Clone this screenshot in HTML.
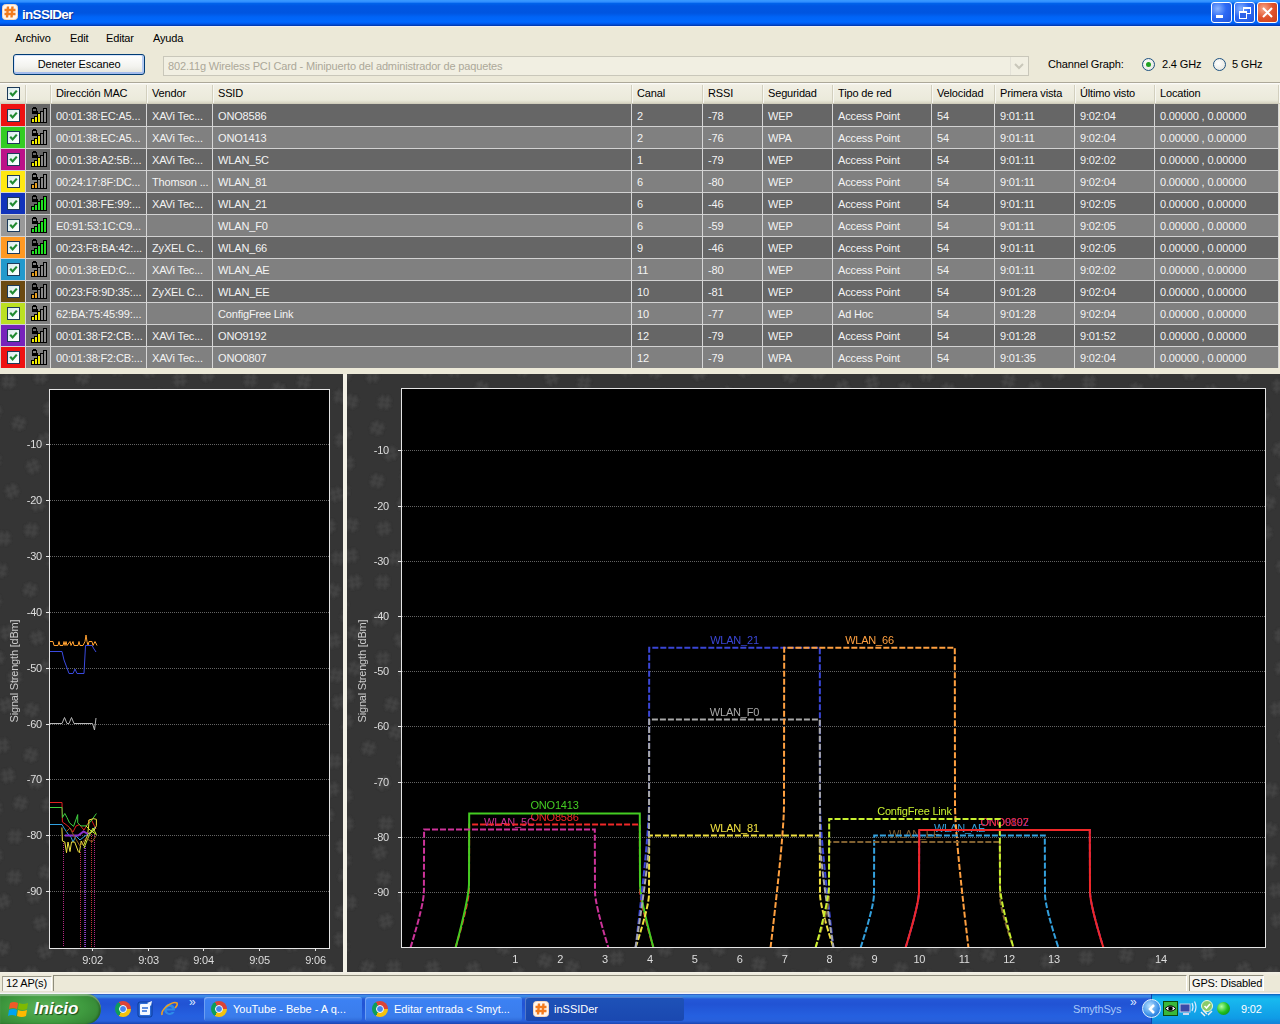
<!DOCTYPE html><html><head><meta charset="utf-8"><style>
*{margin:0;padding:0;box-sizing:border-box}
body{width:1280px;height:1024px;overflow:hidden;position:relative;background:#ECE9D8;font-family:"Liberation Sans", sans-serif;font-size:11px;letter-spacing:-0.15px;color:#000}
.a{position:absolute}
.t{position:absolute;white-space:nowrap;line-height:13px}
</style></head><body>
<div class="a" style="left:0;top:0;width:1280px;height:26px;background:linear-gradient(to bottom,#3A9BFF 0,#2E8CFF 2px,#0062EA 3.5px,#0056E2 6px,#0055E0 13px,#0064F6 17px,#0068FF 22px,#0056E8 24px,#0034A4 26px)"></div><div class="a" style="left:0;top:26px;width:1280px;height:1px;background:#F0F0F4"></div>
<svg class="a" style="left:2px;top:4px" width="16" height="16"><rect x="0.5" y="0.5" width="15" height="15" rx="3" fill="#FFF6EE" stroke="#F4D8C0"/><path d="M6 2.5 L5 13.5 M10.5 2.5 L9.5 13.5 M2.5 6 L13.5 6 M2.5 10 L13.5 10" stroke="#F27B1E" stroke-width="2.4"/></svg>
<div class="t" style="left:22px;top:7px;font:bold 13.5px/15px 'Liberation Sans',sans-serif;color:#FFF;letter-spacing:-0.7px;text-shadow:1px 1px 0 #0A2A8A">inSSIDer</div>
<div class="a" style="left:1211px;top:2px;width:21px;height:21px;border:1px solid #FFF;border-radius:3px;background:radial-gradient(circle at 30% 30%,#8AB4FF 0,#2D6AF5 45%,#1F54DA 100%)"><div class="a" style="left:4px;top:12px;width:7px;height:3px;background:#FFF"></div></div>
<div class="a" style="left:1234px;top:2px;width:21px;height:21px;border:1px solid #FFF;border-radius:3px;background:radial-gradient(circle at 30% 30%,#8AB4FF 0,#2D6AF5 45%,#1F54DA 100%)"><div class="a" style="left:8px;top:4px;width:8px;height:7px;border:1px solid #FFF;border-top-width:2px"></div><div class="a" style="left:4px;top:8px;width:8px;height:8px;border:1px solid #FFF;border-top-width:2px;background:#2D62E8"></div></div>
<div class="a" style="left:1257px;top:2px;width:21px;height:21px;border:1px solid #FFF;border-radius:3px;background:radial-gradient(circle at 30% 30%,#F7A88A 0,#E0522A 50%,#C8401C 100%)"><svg class="a" style="left:3px;top:3px" width="13" height="13"><path d="M2 2 L11 11 M11 2 L2 11" stroke="#FFF" stroke-width="2"/></svg></div>
<div class="t" style="left:15px;top:32px">Archivo</div>
<div class="t" style="left:70px;top:32px">Edit</div>
<div class="t" style="left:106px;top:32px">Editar</div>
<div class="t" style="left:153px;top:32px">Ayuda</div>
<div class="a" style="left:13px;top:54px;width:132px;height:21px;border:1px solid #003C74;border-radius:3px;background:linear-gradient(to bottom,#FFFFFF 0,#F3F3EF 60%,#E2E2DA 100%);box-shadow:inset 0 -2px 0 #A4BCEC, inset -2px 0 0 #B4CAF2, inset 1px 1px 0 #D8E4FA"></div>
<div class="t" style="left:13px;top:58px;width:132px;text-align:center">Deneter Escaneo</div>
<div class="a" style="left:163px;top:56px;width:866px;height:20px;border:1px solid #C9C7BA;background:#F1EFE2"></div>
<div class="t" style="left:168px;top:60px;color:#ACA899">802.11g Wireless PCI Card - Minipuerto del administrador de paquetes</div>
<div class="a" style="left:1010px;top:57px;width:18px;height:18px;background:#F1EFE2;border-left:1px solid #E4E2D8"></div>
<svg class="a" style="left:1013px;top:61px" width="12" height="10"><path d="M2 3 L6 7 L10 3" stroke="#C9C7BA" stroke-width="2" fill="none"/></svg>
<div class="t" style="left:1048px;top:58px">Channel Graph:</div>
<div class="a" style="left:1142px;top:58px;width:13px;height:13px;border-radius:50%;border:1px solid #1C5180;background:radial-gradient(circle at 40% 40%,#FFF 0,#E0E0D8 100%)"></div>
<div class="a" style="left:1146px;top:62px;width:5px;height:5px;border-radius:50%;background:#21A121"></div>
<div class="t" style="left:1162px;top:58px">2.4 GHz</div>
<div class="a" style="left:1213px;top:58px;width:13px;height:13px;border-radius:50%;border:1px solid #1C5180;background:radial-gradient(circle at 40% 40%,#FFF 0,#E0E0D8 100%)"></div>
<div class="t" style="left:1232px;top:58px">5 GHz</div>
<div class="a" style="left:0;top:82px;width:1280px;height:1px;background:#ACA899"></div>
<div class="a" style="left:0;top:83px;width:1280px;height:21px;background:linear-gradient(to bottom,#FFFFFF 0,#F1EFE4 2px,#EBEADB 17px,#D8D5C4 20px,#C9C6B4 21px)"></div>
<div class="a" style="left:25px;top:85px;width:1px;height:18px;background:#D2CFBE"></div><div class="a" style="left:26px;top:85px;width:1px;height:18px;background:#F8F8F2"></div>
<div class="a" style="left:50px;top:85px;width:1px;height:18px;background:#D2CFBE"></div><div class="a" style="left:51px;top:85px;width:1px;height:18px;background:#F8F8F2"></div>
<div class="a" style="left:146px;top:85px;width:1px;height:18px;background:#D2CFBE"></div><div class="a" style="left:147px;top:85px;width:1px;height:18px;background:#F8F8F2"></div>
<div class="a" style="left:212px;top:85px;width:1px;height:18px;background:#D2CFBE"></div><div class="a" style="left:213px;top:85px;width:1px;height:18px;background:#F8F8F2"></div>
<div class="a" style="left:631px;top:85px;width:1px;height:18px;background:#D2CFBE"></div><div class="a" style="left:632px;top:85px;width:1px;height:18px;background:#F8F8F2"></div>
<div class="a" style="left:702px;top:85px;width:1px;height:18px;background:#D2CFBE"></div><div class="a" style="left:703px;top:85px;width:1px;height:18px;background:#F8F8F2"></div>
<div class="a" style="left:762px;top:85px;width:1px;height:18px;background:#D2CFBE"></div><div class="a" style="left:763px;top:85px;width:1px;height:18px;background:#F8F8F2"></div>
<div class="a" style="left:832px;top:85px;width:1px;height:18px;background:#D2CFBE"></div><div class="a" style="left:833px;top:85px;width:1px;height:18px;background:#F8F8F2"></div>
<div class="a" style="left:931px;top:85px;width:1px;height:18px;background:#D2CFBE"></div><div class="a" style="left:932px;top:85px;width:1px;height:18px;background:#F8F8F2"></div>
<div class="a" style="left:994px;top:85px;width:1px;height:18px;background:#D2CFBE"></div><div class="a" style="left:995px;top:85px;width:1px;height:18px;background:#F8F8F2"></div>
<div class="a" style="left:1074px;top:85px;width:1px;height:18px;background:#D2CFBE"></div><div class="a" style="left:1075px;top:85px;width:1px;height:18px;background:#F8F8F2"></div>
<div class="a" style="left:1154px;top:85px;width:1px;height:18px;background:#D2CFBE"></div><div class="a" style="left:1155px;top:85px;width:1px;height:18px;background:#F8F8F2"></div>
<div class="a" style="left:1278px;top:85px;width:1px;height:18px;background:#D2CFBE"></div><div class="a" style="left:1279px;top:85px;width:1px;height:18px;background:#F8F8F2"></div>
<div class="t" style="left:56px;top:87px">Dirección MAC</div>
<div class="t" style="left:152px;top:87px">Vendor</div>
<div class="t" style="left:218px;top:87px">SSID</div>
<div class="t" style="left:637px;top:87px">Canal</div>
<div class="t" style="left:708px;top:87px">RSSI</div>
<div class="t" style="left:768px;top:87px">Seguridad</div>
<div class="t" style="left:838px;top:87px">Tipo de red</div>
<div class="t" style="left:937px;top:87px">Velocidad</div>
<div class="t" style="left:1000px;top:87px">Primera vista</div>
<div class="t" style="left:1080px;top:87px">Último visto</div>
<div class="t" style="left:1160px;top:87px">Location</div>
<div class="a" style="left:7px;top:87px;width:13px;height:13px;border:1px solid #1C3A5A;background:linear-gradient(135deg,#D8E8E8 0,#F0FAFA 60%,#FFF 100%)"></div><svg class="a" style="left:9px;top:89px" width="9" height="9"><path d="M1.2 3.8 L3.6 6.4 L7.8 1.6" stroke="#1E8A30" stroke-width="2.2" fill="none"/></svg>
<div class="a" style="left:1px;top:104px;width:1277px;height:22px;background:#666666"></div>
<div class="a" style="left:1px;top:104px;width:24px;height:22px;background:#EE1111"></div>
<div class="a" style="left:7px;top:109px;width:13px;height:13px;border:1px solid #1C3A5A;background:linear-gradient(135deg,#D8E8E8 0,#F0FAFA 60%,#FFF 100%)"></div><svg class="a" style="left:9px;top:111px" width="9" height="9"><path d="M1.2 3.8 L3.6 6.4 L7.8 1.6" stroke="#1E8A30" stroke-width="2.2" fill="none"/></svg>
<svg class="a" style="left:31px;top:107px" width="17" height="17" shape-rendering="crispEdges"><path d="M1.7 4 V2.6 A1.8 1.8 0 0 1 5.3 2.6 V4" fill="none" stroke="#000" stroke-width="1.4"/><rect x="0.5" y="3.5" width="6" height="3.6" fill="#000"/><rect x="0" y="11" width="4" height="5" fill="#000"/><rect x="1" y="12" width="2" height="3" fill="#F4F000"/><rect x="3" y="9" width="4" height="7" fill="#000"/><rect x="4" y="10" width="2" height="5" fill="#F4F000"/><rect x="6" y="6" width="4" height="10" fill="#000"/><rect x="7" y="7" width="2" height="8" fill="#F4F000"/><rect x="9" y="4" width="4" height="12" fill="#000"/><rect x="10" y="5" width="2" height="10" fill="#8A8A8A"/><rect x="12" y="1" width="4" height="15" fill="#000"/><rect x="13" y="2" width="2" height="13" fill="#8A8A8A"/></svg>
<div class="t" style="left:56px;top:110px;color:#F4F4F4">00:01:38:EC:A5...</div>
<div class="t" style="left:152px;top:110px;color:#F4F4F4">XAVi Tec...</div>
<div class="t" style="left:218px;top:110px;color:#F4F4F4">ONO8586</div>
<div class="t" style="left:637px;top:110px;color:#F4F4F4">2</div>
<div class="t" style="left:708px;top:110px;color:#F4F4F4">-78</div>
<div class="t" style="left:768px;top:110px;color:#F4F4F4">WEP</div>
<div class="t" style="left:838px;top:110px;color:#F4F4F4">Access Point</div>
<div class="t" style="left:937px;top:110px;color:#F4F4F4">54</div>
<div class="t" style="left:1000px;top:110px;color:#F4F4F4">9:01:11</div>
<div class="t" style="left:1080px;top:110px;color:#F4F4F4">9:02:04</div>
<div class="t" style="left:1160px;top:110px;color:#F4F4F4">0.00000 , 0.00000</div>
<div class="a" style="left:1px;top:126px;width:1277px;height:22px;background:#808080"></div>
<div class="a" style="left:1px;top:126px;width:24px;height:22px;background:#33CC22"></div>
<div class="a" style="left:7px;top:131px;width:13px;height:13px;border:1px solid #1C3A5A;background:linear-gradient(135deg,#D8E8E8 0,#F0FAFA 60%,#FFF 100%)"></div><svg class="a" style="left:9px;top:133px" width="9" height="9"><path d="M1.2 3.8 L3.6 6.4 L7.8 1.6" stroke="#1E8A30" stroke-width="2.2" fill="none"/></svg>
<svg class="a" style="left:31px;top:129px" width="17" height="17" shape-rendering="crispEdges"><path d="M1.7 4 V2.6 A1.8 1.8 0 0 1 5.3 2.6 V4" fill="none" stroke="#000" stroke-width="1.4"/><rect x="0.5" y="3.5" width="6" height="3.6" fill="#000"/><rect x="0" y="11" width="4" height="5" fill="#000"/><rect x="1" y="12" width="2" height="3" fill="#F4F000"/><rect x="3" y="9" width="4" height="7" fill="#000"/><rect x="4" y="10" width="2" height="5" fill="#F4F000"/><rect x="6" y="6" width="4" height="10" fill="#000"/><rect x="7" y="7" width="2" height="8" fill="#F4F000"/><rect x="9" y="4" width="4" height="12" fill="#000"/><rect x="10" y="5" width="2" height="10" fill="#8A8A8A"/><rect x="12" y="1" width="4" height="15" fill="#000"/><rect x="13" y="2" width="2" height="13" fill="#8A8A8A"/></svg>
<div class="t" style="left:56px;top:132px;color:#F4F4F4">00:01:38:EC:A5...</div>
<div class="t" style="left:152px;top:132px;color:#F4F4F4">XAVi Tec...</div>
<div class="t" style="left:218px;top:132px;color:#F4F4F4">ONO1413</div>
<div class="t" style="left:637px;top:132px;color:#F4F4F4">2</div>
<div class="t" style="left:708px;top:132px;color:#F4F4F4">-76</div>
<div class="t" style="left:768px;top:132px;color:#F4F4F4">WPA</div>
<div class="t" style="left:838px;top:132px;color:#F4F4F4">Access Point</div>
<div class="t" style="left:937px;top:132px;color:#F4F4F4">54</div>
<div class="t" style="left:1000px;top:132px;color:#F4F4F4">9:01:11</div>
<div class="t" style="left:1080px;top:132px;color:#F4F4F4">9:02:04</div>
<div class="t" style="left:1160px;top:132px;color:#F4F4F4">0.00000 , 0.00000</div>
<div class="a" style="left:1px;top:148px;width:1277px;height:22px;background:#666666"></div>
<div class="a" style="left:1px;top:148px;width:24px;height:22px;background:#BB1188"></div>
<div class="a" style="left:7px;top:153px;width:13px;height:13px;border:1px solid #1C3A5A;background:linear-gradient(135deg,#D8E8E8 0,#F0FAFA 60%,#FFF 100%)"></div><svg class="a" style="left:9px;top:155px" width="9" height="9"><path d="M1.2 3.8 L3.6 6.4 L7.8 1.6" stroke="#1E8A30" stroke-width="2.2" fill="none"/></svg>
<svg class="a" style="left:31px;top:151px" width="17" height="17" shape-rendering="crispEdges"><path d="M1.7 4 V2.6 A1.8 1.8 0 0 1 5.3 2.6 V4" fill="none" stroke="#000" stroke-width="1.4"/><rect x="0.5" y="3.5" width="6" height="3.6" fill="#000"/><rect x="0" y="11" width="4" height="5" fill="#000"/><rect x="1" y="12" width="2" height="3" fill="#F4F000"/><rect x="3" y="9" width="4" height="7" fill="#000"/><rect x="4" y="10" width="2" height="5" fill="#F4F000"/><rect x="6" y="6" width="4" height="10" fill="#000"/><rect x="7" y="7" width="2" height="8" fill="#F4F000"/><rect x="9" y="4" width="4" height="12" fill="#000"/><rect x="10" y="5" width="2" height="10" fill="#8A8A8A"/><rect x="12" y="1" width="4" height="15" fill="#000"/><rect x="13" y="2" width="2" height="13" fill="#8A8A8A"/></svg>
<div class="t" style="left:56px;top:154px;color:#F4F4F4">00:01:38:A2:5B:...</div>
<div class="t" style="left:152px;top:154px;color:#F4F4F4">XAVi Tec...</div>
<div class="t" style="left:218px;top:154px;color:#F4F4F4">WLAN_5C</div>
<div class="t" style="left:637px;top:154px;color:#F4F4F4">1</div>
<div class="t" style="left:708px;top:154px;color:#F4F4F4">-79</div>
<div class="t" style="left:768px;top:154px;color:#F4F4F4">WEP</div>
<div class="t" style="left:838px;top:154px;color:#F4F4F4">Access Point</div>
<div class="t" style="left:937px;top:154px;color:#F4F4F4">54</div>
<div class="t" style="left:1000px;top:154px;color:#F4F4F4">9:01:11</div>
<div class="t" style="left:1080px;top:154px;color:#F4F4F4">9:02:02</div>
<div class="t" style="left:1160px;top:154px;color:#F4F4F4">0.00000 , 0.00000</div>
<div class="a" style="left:1px;top:170px;width:1277px;height:22px;background:#808080"></div>
<div class="a" style="left:1px;top:170px;width:24px;height:22px;background:#FFE811"></div>
<div class="a" style="left:7px;top:175px;width:13px;height:13px;border:1px solid #1C3A5A;background:linear-gradient(135deg,#D8E8E8 0,#F0FAFA 60%,#FFF 100%)"></div><svg class="a" style="left:9px;top:177px" width="9" height="9"><path d="M1.2 3.8 L3.6 6.4 L7.8 1.6" stroke="#1E8A30" stroke-width="2.2" fill="none"/></svg>
<svg class="a" style="left:31px;top:173px" width="17" height="17" shape-rendering="crispEdges"><path d="M1.7 4 V2.6 A1.8 1.8 0 0 1 5.3 2.6 V4" fill="none" stroke="#000" stroke-width="1.4"/><rect x="0.5" y="3.5" width="6" height="3.6" fill="#000"/><rect x="0" y="11" width="4" height="5" fill="#000"/><rect x="1" y="12" width="2" height="3" fill="#E8A020"/><rect x="3" y="9" width="4" height="7" fill="#000"/><rect x="4" y="10" width="2" height="5" fill="#E8A020"/><rect x="6" y="6" width="4" height="10" fill="#000"/><rect x="7" y="7" width="2" height="8" fill="#8A8A8A"/><rect x="9" y="4" width="4" height="12" fill="#000"/><rect x="10" y="5" width="2" height="10" fill="#8A8A8A"/><rect x="12" y="1" width="4" height="15" fill="#000"/><rect x="13" y="2" width="2" height="13" fill="#8A8A8A"/></svg>
<div class="t" style="left:56px;top:176px;color:#F4F4F4">00:24:17:8F:DC...</div>
<div class="t" style="left:152px;top:176px;color:#F4F4F4">Thomson ...</div>
<div class="t" style="left:218px;top:176px;color:#F4F4F4">WLAN_81</div>
<div class="t" style="left:637px;top:176px;color:#F4F4F4">6</div>
<div class="t" style="left:708px;top:176px;color:#F4F4F4">-80</div>
<div class="t" style="left:768px;top:176px;color:#F4F4F4">WEP</div>
<div class="t" style="left:838px;top:176px;color:#F4F4F4">Access Point</div>
<div class="t" style="left:937px;top:176px;color:#F4F4F4">54</div>
<div class="t" style="left:1000px;top:176px;color:#F4F4F4">9:01:11</div>
<div class="t" style="left:1080px;top:176px;color:#F4F4F4">9:02:04</div>
<div class="t" style="left:1160px;top:176px;color:#F4F4F4">0.00000 , 0.00000</div>
<div class="a" style="left:1px;top:192px;width:1277px;height:22px;background:#666666"></div>
<div class="a" style="left:1px;top:192px;width:24px;height:22px;background:#1133BB"></div>
<div class="a" style="left:7px;top:197px;width:13px;height:13px;border:1px solid #1C3A5A;background:linear-gradient(135deg,#D8E8E8 0,#F0FAFA 60%,#FFF 100%)"></div><svg class="a" style="left:9px;top:199px" width="9" height="9"><path d="M1.2 3.8 L3.6 6.4 L7.8 1.6" stroke="#1E8A30" stroke-width="2.2" fill="none"/></svg>
<svg class="a" style="left:31px;top:195px" width="17" height="17" shape-rendering="crispEdges"><path d="M1.7 4 V2.6 A1.8 1.8 0 0 1 5.3 2.6 V4" fill="none" stroke="#000" stroke-width="1.4"/><rect x="0.5" y="3.5" width="6" height="3.6" fill="#000"/><rect x="0" y="11" width="4" height="5" fill="#000"/><rect x="1" y="12" width="2" height="3" fill="#22E022"/><rect x="3" y="9" width="4" height="7" fill="#000"/><rect x="4" y="10" width="2" height="5" fill="#22E022"/><rect x="6" y="6" width="4" height="10" fill="#000"/><rect x="7" y="7" width="2" height="8" fill="#22E022"/><rect x="9" y="4" width="4" height="12" fill="#000"/><rect x="10" y="5" width="2" height="10" fill="#22E022"/><rect x="12" y="1" width="4" height="15" fill="#000"/><rect x="13" y="2" width="2" height="13" fill="#22E022"/></svg>
<div class="t" style="left:56px;top:198px;color:#F4F4F4">00:01:38:FE:99:...</div>
<div class="t" style="left:152px;top:198px;color:#F4F4F4">XAVi Tec...</div>
<div class="t" style="left:218px;top:198px;color:#F4F4F4">WLAN_21</div>
<div class="t" style="left:637px;top:198px;color:#F4F4F4">6</div>
<div class="t" style="left:708px;top:198px;color:#F4F4F4">-46</div>
<div class="t" style="left:768px;top:198px;color:#F4F4F4">WEP</div>
<div class="t" style="left:838px;top:198px;color:#F4F4F4">Access Point</div>
<div class="t" style="left:937px;top:198px;color:#F4F4F4">54</div>
<div class="t" style="left:1000px;top:198px;color:#F4F4F4">9:01:11</div>
<div class="t" style="left:1080px;top:198px;color:#F4F4F4">9:02:05</div>
<div class="t" style="left:1160px;top:198px;color:#F4F4F4">0.00000 , 0.00000</div>
<div class="a" style="left:1px;top:214px;width:1277px;height:22px;background:#808080"></div>
<div class="a" style="left:1px;top:214px;width:24px;height:22px;background:#999999"></div>
<div class="a" style="left:7px;top:219px;width:13px;height:13px;border:1px solid #1C3A5A;background:linear-gradient(135deg,#D8E8E8 0,#F0FAFA 60%,#FFF 100%)"></div><svg class="a" style="left:9px;top:221px" width="9" height="9"><path d="M1.2 3.8 L3.6 6.4 L7.8 1.6" stroke="#1E8A30" stroke-width="2.2" fill="none"/></svg>
<svg class="a" style="left:31px;top:217px" width="17" height="17" shape-rendering="crispEdges"><path d="M1.7 4 V2.6 A1.8 1.8 0 0 1 5.3 2.6 V4" fill="none" stroke="#000" stroke-width="1.4"/><rect x="0.5" y="3.5" width="6" height="3.6" fill="#000"/><rect x="0" y="11" width="4" height="5" fill="#000"/><rect x="1" y="12" width="2" height="3" fill="#22E022"/><rect x="3" y="9" width="4" height="7" fill="#000"/><rect x="4" y="10" width="2" height="5" fill="#22E022"/><rect x="6" y="6" width="4" height="10" fill="#000"/><rect x="7" y="7" width="2" height="8" fill="#22E022"/><rect x="9" y="4" width="4" height="12" fill="#000"/><rect x="10" y="5" width="2" height="10" fill="#22E022"/><rect x="12" y="1" width="4" height="15" fill="#000"/><rect x="13" y="2" width="2" height="13" fill="#22E022"/></svg>
<div class="t" style="left:56px;top:220px;color:#F4F4F4">E0:91:53:1C:C9...</div>
<div class="t" style="left:218px;top:220px;color:#F4F4F4">WLAN_F0</div>
<div class="t" style="left:637px;top:220px;color:#F4F4F4">6</div>
<div class="t" style="left:708px;top:220px;color:#F4F4F4">-59</div>
<div class="t" style="left:768px;top:220px;color:#F4F4F4">WEP</div>
<div class="t" style="left:838px;top:220px;color:#F4F4F4">Access Point</div>
<div class="t" style="left:937px;top:220px;color:#F4F4F4">54</div>
<div class="t" style="left:1000px;top:220px;color:#F4F4F4">9:01:11</div>
<div class="t" style="left:1080px;top:220px;color:#F4F4F4">9:02:05</div>
<div class="t" style="left:1160px;top:220px;color:#F4F4F4">0.00000 , 0.00000</div>
<div class="a" style="left:1px;top:236px;width:1277px;height:22px;background:#666666"></div>
<div class="a" style="left:1px;top:236px;width:24px;height:22px;background:#FF9922"></div>
<div class="a" style="left:7px;top:241px;width:13px;height:13px;border:1px solid #1C3A5A;background:linear-gradient(135deg,#D8E8E8 0,#F0FAFA 60%,#FFF 100%)"></div><svg class="a" style="left:9px;top:243px" width="9" height="9"><path d="M1.2 3.8 L3.6 6.4 L7.8 1.6" stroke="#1E8A30" stroke-width="2.2" fill="none"/></svg>
<svg class="a" style="left:31px;top:239px" width="17" height="17" shape-rendering="crispEdges"><path d="M1.7 4 V2.6 A1.8 1.8 0 0 1 5.3 2.6 V4" fill="none" stroke="#000" stroke-width="1.4"/><rect x="0.5" y="3.5" width="6" height="3.6" fill="#000"/><rect x="0" y="11" width="4" height="5" fill="#000"/><rect x="1" y="12" width="2" height="3" fill="#22E022"/><rect x="3" y="9" width="4" height="7" fill="#000"/><rect x="4" y="10" width="2" height="5" fill="#22E022"/><rect x="6" y="6" width="4" height="10" fill="#000"/><rect x="7" y="7" width="2" height="8" fill="#22E022"/><rect x="9" y="4" width="4" height="12" fill="#000"/><rect x="10" y="5" width="2" height="10" fill="#22E022"/><rect x="12" y="1" width="4" height="15" fill="#000"/><rect x="13" y="2" width="2" height="13" fill="#22E022"/></svg>
<div class="t" style="left:56px;top:242px;color:#F4F4F4">00:23:F8:BA:42:...</div>
<div class="t" style="left:152px;top:242px;color:#F4F4F4">ZyXEL C...</div>
<div class="t" style="left:218px;top:242px;color:#F4F4F4">WLAN_66</div>
<div class="t" style="left:637px;top:242px;color:#F4F4F4">9</div>
<div class="t" style="left:708px;top:242px;color:#F4F4F4">-46</div>
<div class="t" style="left:768px;top:242px;color:#F4F4F4">WEP</div>
<div class="t" style="left:838px;top:242px;color:#F4F4F4">Access Point</div>
<div class="t" style="left:937px;top:242px;color:#F4F4F4">54</div>
<div class="t" style="left:1000px;top:242px;color:#F4F4F4">9:01:11</div>
<div class="t" style="left:1080px;top:242px;color:#F4F4F4">9:02:05</div>
<div class="t" style="left:1160px;top:242px;color:#F4F4F4">0.00000 , 0.00000</div>
<div class="a" style="left:1px;top:258px;width:1277px;height:22px;background:#808080"></div>
<div class="a" style="left:1px;top:258px;width:24px;height:22px;background:#2299CC"></div>
<div class="a" style="left:7px;top:263px;width:13px;height:13px;border:1px solid #1C3A5A;background:linear-gradient(135deg,#D8E8E8 0,#F0FAFA 60%,#FFF 100%)"></div><svg class="a" style="left:9px;top:265px" width="9" height="9"><path d="M1.2 3.8 L3.6 6.4 L7.8 1.6" stroke="#1E8A30" stroke-width="2.2" fill="none"/></svg>
<svg class="a" style="left:31px;top:261px" width="17" height="17" shape-rendering="crispEdges"><path d="M1.7 4 V2.6 A1.8 1.8 0 0 1 5.3 2.6 V4" fill="none" stroke="#000" stroke-width="1.4"/><rect x="0.5" y="3.5" width="6" height="3.6" fill="#000"/><rect x="0" y="11" width="4" height="5" fill="#000"/><rect x="1" y="12" width="2" height="3" fill="#E8A020"/><rect x="3" y="9" width="4" height="7" fill="#000"/><rect x="4" y="10" width="2" height="5" fill="#E8A020"/><rect x="6" y="6" width="4" height="10" fill="#000"/><rect x="7" y="7" width="2" height="8" fill="#8A8A8A"/><rect x="9" y="4" width="4" height="12" fill="#000"/><rect x="10" y="5" width="2" height="10" fill="#8A8A8A"/><rect x="12" y="1" width="4" height="15" fill="#000"/><rect x="13" y="2" width="2" height="13" fill="#8A8A8A"/></svg>
<div class="t" style="left:56px;top:264px;color:#F4F4F4">00:01:38:ED:C...</div>
<div class="t" style="left:152px;top:264px;color:#F4F4F4">XAVi Tec...</div>
<div class="t" style="left:218px;top:264px;color:#F4F4F4">WLAN_AE</div>
<div class="t" style="left:637px;top:264px;color:#F4F4F4">11</div>
<div class="t" style="left:708px;top:264px;color:#F4F4F4">-80</div>
<div class="t" style="left:768px;top:264px;color:#F4F4F4">WEP</div>
<div class="t" style="left:838px;top:264px;color:#F4F4F4">Access Point</div>
<div class="t" style="left:937px;top:264px;color:#F4F4F4">54</div>
<div class="t" style="left:1000px;top:264px;color:#F4F4F4">9:01:11</div>
<div class="t" style="left:1080px;top:264px;color:#F4F4F4">9:02:02</div>
<div class="t" style="left:1160px;top:264px;color:#F4F4F4">0.00000 , 0.00000</div>
<div class="a" style="left:1px;top:280px;width:1277px;height:22px;background:#666666"></div>
<div class="a" style="left:1px;top:280px;width:24px;height:22px;background:#6B4A11"></div>
<div class="a" style="left:7px;top:285px;width:13px;height:13px;border:1px solid #1C3A5A;background:linear-gradient(135deg,#D8E8E8 0,#F0FAFA 60%,#FFF 100%)"></div><svg class="a" style="left:9px;top:287px" width="9" height="9"><path d="M1.2 3.8 L3.6 6.4 L7.8 1.6" stroke="#1E8A30" stroke-width="2.2" fill="none"/></svg>
<svg class="a" style="left:31px;top:283px" width="17" height="17" shape-rendering="crispEdges"><path d="M1.7 4 V2.6 A1.8 1.8 0 0 1 5.3 2.6 V4" fill="none" stroke="#000" stroke-width="1.4"/><rect x="0.5" y="3.5" width="6" height="3.6" fill="#000"/><rect x="0" y="11" width="4" height="5" fill="#000"/><rect x="1" y="12" width="2" height="3" fill="#E8A020"/><rect x="3" y="9" width="4" height="7" fill="#000"/><rect x="4" y="10" width="2" height="5" fill="#E8A020"/><rect x="6" y="6" width="4" height="10" fill="#000"/><rect x="7" y="7" width="2" height="8" fill="#8A8A8A"/><rect x="9" y="4" width="4" height="12" fill="#000"/><rect x="10" y="5" width="2" height="10" fill="#8A8A8A"/><rect x="12" y="1" width="4" height="15" fill="#000"/><rect x="13" y="2" width="2" height="13" fill="#8A8A8A"/></svg>
<div class="t" style="left:56px;top:286px;color:#F4F4F4">00:23:F8:9D:35:...</div>
<div class="t" style="left:152px;top:286px;color:#F4F4F4">ZyXEL C...</div>
<div class="t" style="left:218px;top:286px;color:#F4F4F4">WLAN_EE</div>
<div class="t" style="left:637px;top:286px;color:#F4F4F4">10</div>
<div class="t" style="left:708px;top:286px;color:#F4F4F4">-81</div>
<div class="t" style="left:768px;top:286px;color:#F4F4F4">WEP</div>
<div class="t" style="left:838px;top:286px;color:#F4F4F4">Access Point</div>
<div class="t" style="left:937px;top:286px;color:#F4F4F4">54</div>
<div class="t" style="left:1000px;top:286px;color:#F4F4F4">9:01:28</div>
<div class="t" style="left:1080px;top:286px;color:#F4F4F4">9:02:04</div>
<div class="t" style="left:1160px;top:286px;color:#F4F4F4">0.00000 , 0.00000</div>
<div class="a" style="left:1px;top:302px;width:1277px;height:22px;background:#808080"></div>
<div class="a" style="left:1px;top:302px;width:24px;height:22px;background:#BBE022"></div>
<div class="a" style="left:7px;top:307px;width:13px;height:13px;border:1px solid #1C3A5A;background:linear-gradient(135deg,#D8E8E8 0,#F0FAFA 60%,#FFF 100%)"></div><svg class="a" style="left:9px;top:309px" width="9" height="9"><path d="M1.2 3.8 L3.6 6.4 L7.8 1.6" stroke="#1E8A30" stroke-width="2.2" fill="none"/></svg>
<svg class="a" style="left:31px;top:305px" width="17" height="17" shape-rendering="crispEdges"><path d="M1.7 4 V2.6 A1.8 1.8 0 0 1 5.3 2.6 V4" fill="none" stroke="#000" stroke-width="1.4"/><rect x="0.5" y="3.5" width="6" height="3.6" fill="#000"/><rect x="0" y="11" width="4" height="5" fill="#000"/><rect x="1" y="12" width="2" height="3" fill="#F4F000"/><rect x="3" y="9" width="4" height="7" fill="#000"/><rect x="4" y="10" width="2" height="5" fill="#F4F000"/><rect x="6" y="6" width="4" height="10" fill="#000"/><rect x="7" y="7" width="2" height="8" fill="#F4F000"/><rect x="9" y="4" width="4" height="12" fill="#000"/><rect x="10" y="5" width="2" height="10" fill="#8A8A8A"/><rect x="12" y="1" width="4" height="15" fill="#000"/><rect x="13" y="2" width="2" height="13" fill="#8A8A8A"/></svg>
<div class="t" style="left:56px;top:308px;color:#F4F4F4">62:BA:75:45:99:...</div>
<div class="t" style="left:218px;top:308px;color:#F4F4F4">ConfigFree Link</div>
<div class="t" style="left:637px;top:308px;color:#F4F4F4">10</div>
<div class="t" style="left:708px;top:308px;color:#F4F4F4">-77</div>
<div class="t" style="left:768px;top:308px;color:#F4F4F4">WEP</div>
<div class="t" style="left:838px;top:308px;color:#F4F4F4">Ad Hoc</div>
<div class="t" style="left:937px;top:308px;color:#F4F4F4">54</div>
<div class="t" style="left:1000px;top:308px;color:#F4F4F4">9:01:28</div>
<div class="t" style="left:1080px;top:308px;color:#F4F4F4">9:02:04</div>
<div class="t" style="left:1160px;top:308px;color:#F4F4F4">0.00000 , 0.00000</div>
<div class="a" style="left:1px;top:324px;width:1277px;height:22px;background:#666666"></div>
<div class="a" style="left:1px;top:324px;width:24px;height:22px;background:#7722BB"></div>
<div class="a" style="left:7px;top:329px;width:13px;height:13px;border:1px solid #1C3A5A;background:linear-gradient(135deg,#D8E8E8 0,#F0FAFA 60%,#FFF 100%)"></div><svg class="a" style="left:9px;top:331px" width="9" height="9"><path d="M1.2 3.8 L3.6 6.4 L7.8 1.6" stroke="#1E8A30" stroke-width="2.2" fill="none"/></svg>
<svg class="a" style="left:31px;top:327px" width="17" height="17" shape-rendering="crispEdges"><path d="M1.7 4 V2.6 A1.8 1.8 0 0 1 5.3 2.6 V4" fill="none" stroke="#000" stroke-width="1.4"/><rect x="0.5" y="3.5" width="6" height="3.6" fill="#000"/><rect x="0" y="11" width="4" height="5" fill="#000"/><rect x="1" y="12" width="2" height="3" fill="#F4F000"/><rect x="3" y="9" width="4" height="7" fill="#000"/><rect x="4" y="10" width="2" height="5" fill="#F4F000"/><rect x="6" y="6" width="4" height="10" fill="#000"/><rect x="7" y="7" width="2" height="8" fill="#F4F000"/><rect x="9" y="4" width="4" height="12" fill="#000"/><rect x="10" y="5" width="2" height="10" fill="#8A8A8A"/><rect x="12" y="1" width="4" height="15" fill="#000"/><rect x="13" y="2" width="2" height="13" fill="#8A8A8A"/></svg>
<div class="t" style="left:56px;top:330px;color:#F4F4F4">00:01:38:F2:CB:...</div>
<div class="t" style="left:152px;top:330px;color:#F4F4F4">XAVi Tec...</div>
<div class="t" style="left:218px;top:330px;color:#F4F4F4">ONO9192</div>
<div class="t" style="left:637px;top:330px;color:#F4F4F4">12</div>
<div class="t" style="left:708px;top:330px;color:#F4F4F4">-79</div>
<div class="t" style="left:768px;top:330px;color:#F4F4F4">WEP</div>
<div class="t" style="left:838px;top:330px;color:#F4F4F4">Access Point</div>
<div class="t" style="left:937px;top:330px;color:#F4F4F4">54</div>
<div class="t" style="left:1000px;top:330px;color:#F4F4F4">9:01:28</div>
<div class="t" style="left:1080px;top:330px;color:#F4F4F4">9:01:52</div>
<div class="t" style="left:1160px;top:330px;color:#F4F4F4">0.00000 , 0.00000</div>
<div class="a" style="left:1px;top:346px;width:1277px;height:22px;background:#808080"></div>
<div class="a" style="left:1px;top:346px;width:24px;height:22px;background:#EE1111"></div>
<div class="a" style="left:7px;top:351px;width:13px;height:13px;border:1px solid #1C3A5A;background:linear-gradient(135deg,#D8E8E8 0,#F0FAFA 60%,#FFF 100%)"></div><svg class="a" style="left:9px;top:353px" width="9" height="9"><path d="M1.2 3.8 L3.6 6.4 L7.8 1.6" stroke="#1E8A30" stroke-width="2.2" fill="none"/></svg>
<svg class="a" style="left:31px;top:349px" width="17" height="17" shape-rendering="crispEdges"><path d="M1.7 4 V2.6 A1.8 1.8 0 0 1 5.3 2.6 V4" fill="none" stroke="#000" stroke-width="1.4"/><rect x="0.5" y="3.5" width="6" height="3.6" fill="#000"/><rect x="0" y="11" width="4" height="5" fill="#000"/><rect x="1" y="12" width="2" height="3" fill="#F4F000"/><rect x="3" y="9" width="4" height="7" fill="#000"/><rect x="4" y="10" width="2" height="5" fill="#F4F000"/><rect x="6" y="6" width="4" height="10" fill="#000"/><rect x="7" y="7" width="2" height="8" fill="#F4F000"/><rect x="9" y="4" width="4" height="12" fill="#000"/><rect x="10" y="5" width="2" height="10" fill="#8A8A8A"/><rect x="12" y="1" width="4" height="15" fill="#000"/><rect x="13" y="2" width="2" height="13" fill="#8A8A8A"/></svg>
<div class="t" style="left:56px;top:352px;color:#F4F4F4">00:01:38:F2:CB:...</div>
<div class="t" style="left:152px;top:352px;color:#F4F4F4">XAVi Tec...</div>
<div class="t" style="left:218px;top:352px;color:#F4F4F4">ONO0807</div>
<div class="t" style="left:637px;top:352px;color:#F4F4F4">12</div>
<div class="t" style="left:708px;top:352px;color:#F4F4F4">-79</div>
<div class="t" style="left:768px;top:352px;color:#F4F4F4">WPA</div>
<div class="t" style="left:838px;top:352px;color:#F4F4F4">Access Point</div>
<div class="t" style="left:937px;top:352px;color:#F4F4F4">54</div>
<div class="t" style="left:1000px;top:352px;color:#F4F4F4">9:01:35</div>
<div class="t" style="left:1080px;top:352px;color:#F4F4F4">9:02:04</div>
<div class="t" style="left:1160px;top:352px;color:#F4F4F4">0.00000 , 0.00000</div>
<div class="a" style="left:0;top:126px;width:1278px;height:1px;background:#D2D2D2"></div>
<div class="a" style="left:0;top:148px;width:1278px;height:1px;background:#D2D2D2"></div>
<div class="a" style="left:0;top:170px;width:1278px;height:1px;background:#D2D2D2"></div>
<div class="a" style="left:0;top:192px;width:1278px;height:1px;background:#D2D2D2"></div>
<div class="a" style="left:0;top:214px;width:1278px;height:1px;background:#D2D2D2"></div>
<div class="a" style="left:0;top:236px;width:1278px;height:1px;background:#D2D2D2"></div>
<div class="a" style="left:0;top:258px;width:1278px;height:1px;background:#D2D2D2"></div>
<div class="a" style="left:0;top:280px;width:1278px;height:1px;background:#D2D2D2"></div>
<div class="a" style="left:0;top:302px;width:1278px;height:1px;background:#D2D2D2"></div>
<div class="a" style="left:0;top:324px;width:1278px;height:1px;background:#D2D2D2"></div>
<div class="a" style="left:0;top:346px;width:1278px;height:1px;background:#D2D2D2"></div>
<div class="a" style="left:25px;top:104px;width:1px;height:264px;background:#D6D6D6"></div>
<div class="a" style="left:50px;top:104px;width:1px;height:264px;background:#D6D6D6"></div>
<div class="a" style="left:146px;top:104px;width:1px;height:264px;background:#D6D6D6"></div>
<div class="a" style="left:212px;top:104px;width:1px;height:264px;background:#D6D6D6"></div>
<div class="a" style="left:631px;top:104px;width:1px;height:264px;background:#D6D6D6"></div>
<div class="a" style="left:702px;top:104px;width:1px;height:264px;background:#D6D6D6"></div>
<div class="a" style="left:762px;top:104px;width:1px;height:264px;background:#D6D6D6"></div>
<div class="a" style="left:832px;top:104px;width:1px;height:264px;background:#D6D6D6"></div>
<div class="a" style="left:931px;top:104px;width:1px;height:264px;background:#D6D6D6"></div>
<div class="a" style="left:994px;top:104px;width:1px;height:264px;background:#D6D6D6"></div>
<div class="a" style="left:1074px;top:104px;width:1px;height:264px;background:#D6D6D6"></div>
<div class="a" style="left:1154px;top:104px;width:1px;height:264px;background:#D6D6D6"></div>
<div class="a" style="left:1278px;top:104px;width:1px;height:264px;background:#D6D6D6"></div>
<div class="a" style="left:0;top:104px;width:1px;height:264px;background:#D6D6D6"></div>
<div class="a" style="left:0;top:374px;width:343px;height:598px;background:#353535;overflow:hidden">
<svg class="a" style="left:0;top:0" width="343" height="598"><defs><filter id="bl343" x="-10%" y="-10%" width="120%" height="120%"><feGaussianBlur stdDeviation="0.8"/></filter><path id="hs343" d="M-2,-6 L-2.8,6 M2.8,-6 L2,6 M-6,-2.2 L6,-2.2 M-6,2.2 L6,2.2" stroke="#444444" stroke-width="2.3" fill="none"/></defs><g filter="url(#bl343)"><use href="#hs343" transform="translate(109.0,86.0) rotate(-18) scale(1.15)"/><use href="#hs343" transform="translate(225.1,38.2) rotate(-3) scale(1.15)"/><use href="#hs343" transform="translate(184.2,217.1) rotate(-19) scale(1.15)"/><use href="#hs343" transform="translate(14.6,303.5) rotate(-5) scale(1.15)"/><use href="#hs343" transform="translate(7.3,258.5) rotate(-14) scale(1.15)"/><use href="#hs343" transform="translate(18.8,49.3) rotate(20) scale(1.15)"/><use href="#hs343" transform="translate(144.7,498.4) rotate(-22) scale(1.15)"/><use href="#hs343" transform="translate(37.9,130.2) rotate(-8) scale(1.15)"/><use href="#hs343" transform="translate(216.7,572.1) rotate(21) scale(1.15)"/><use href="#hs343" transform="translate(340.6,22.4) rotate(9) scale(1.15)"/><use href="#hs343" transform="translate(298.8,170.7) rotate(-13) scale(1.15)"/><use href="#hs343" transform="translate(45.2,65.9) rotate(-23) scale(1.15)"/><use href="#hs343" transform="translate(103.5,491.8) rotate(-21) scale(1.15)"/><use href="#hs343" transform="translate(58.2,348.8) rotate(-14) scale(1.15)"/><use href="#hs343" transform="translate(220.8,221.2) rotate(22) scale(1.15)"/><use href="#hs343" transform="translate(188.4,32.3) rotate(6) scale(1.15)"/><use href="#hs343" transform="translate(235.5,254.8) rotate(18) scale(1.15)"/><use href="#hs343" transform="translate(105.5,351.2) rotate(-11) scale(1.15)"/><use href="#hs343" transform="translate(154.9,176.9) rotate(-22) scale(1.15)"/><use href="#hs343" transform="translate(276.0,420.4) rotate(7) scale(1.15)"/><use href="#hs343" transform="translate(180.4,527.8) rotate(-1) scale(1.15)"/><use href="#hs343" transform="translate(253.0,169.6) rotate(-3) scale(1.15)"/><use href="#hs343" transform="translate(342.0,66.0) rotate(1) scale(1.15)"/><use href="#hs343" transform="translate(142.4,455.9) rotate(-21) scale(1.15)"/><use href="#hs343" transform="translate(48.0,292.3) rotate(-16) scale(1.15)"/><use href="#hs343" transform="translate(7.9,401.6) rotate(-12) scale(1.15)"/><use href="#hs343" transform="translate(265.4,343.5) rotate(-18) scale(1.15)"/><use href="#hs343" transform="translate(240.8,356.6) rotate(-4) scale(1.15)"/><use href="#hs343" transform="translate(199.9,272.3) rotate(3) scale(1.15)"/><use href="#hs343" transform="translate(292.2,570.3) rotate(-4) scale(1.15)"/><use href="#hs343" transform="translate(162.3,399.1) rotate(-22) scale(1.15)"/><use href="#hs343" transform="translate(223.7,599.8) rotate(4) scale(1.15)"/><use href="#hs343" transform="translate(131.0,401.9) rotate(7) scale(1.15)"/><use href="#hs343" transform="translate(14.9,462.6) rotate(1) scale(1.15)"/><use href="#hs343" transform="translate(132.8,525.6) rotate(16) scale(1.15)"/><use href="#hs343" transform="translate(284.8,521.0) rotate(6) scale(1.15)"/><use href="#hs343" transform="translate(92.8,247.3) rotate(-21) scale(1.15)"/><use href="#hs343" transform="translate(76.8,289.8) rotate(-12) scale(1.15)"/><use href="#hs343" transform="translate(203.1,154.3) rotate(7) scale(1.15)"/><use href="#hs343" transform="translate(332.3,415.2) rotate(-9) scale(1.15)"/><use href="#hs343" transform="translate(177.0,370.7) rotate(-21) scale(1.15)"/><use href="#hs343" transform="translate(313.3,469.8) rotate(4) scale(1.15)"/><use href="#hs343" transform="translate(133.3,237.4) rotate(-9) scale(1.15)"/><use href="#hs343" transform="translate(30.8,380.9) rotate(20) scale(1.15)"/><use href="#hs343" transform="translate(68.1,93.0) rotate(14) scale(1.15)"/><use href="#hs343" transform="translate(114.7,26.1) rotate(10) scale(1.15)"/><use href="#hs343" transform="translate(-5.9,86.3) rotate(3) scale(1.15)"/><use href="#hs343" transform="translate(30.0,215.8) rotate(21) scale(1.15)"/><use href="#hs343" transform="translate(3.1,527.3) rotate(-23) scale(1.15)"/><use href="#hs343" transform="translate(212.0,84.6) rotate(-19) scale(1.15)"/><use href="#hs343" transform="translate(83.6,205.9) rotate(1) scale(1.15)"/><use href="#hs343" transform="translate(295.4,599.8) rotate(13) scale(1.15)"/><use href="#hs343" transform="translate(159.4,289.1) rotate(-14) scale(1.15)"/><use href="#hs343" transform="translate(115.6,155.5) rotate(-21) scale(1.15)"/><use href="#hs343" transform="translate(288.2,92.5) rotate(4) scale(1.15)"/><use href="#hs343" transform="translate(2.2,574.1) rotate(20) scale(1.15)"/><use href="#hs343" transform="translate(181.5,83.4) rotate(12) scale(1.15)"/><use href="#hs343" transform="translate(181.5,590.9) rotate(17) scale(1.15)"/><use href="#hs343" transform="translate(53.3,464.9) rotate(-2) scale(1.15)"/><use href="#hs343" transform="translate(183.1,469.2) rotate(14) scale(1.15)"/><use href="#hs343" transform="translate(284.5,445.3) rotate(-17) scale(1.15)"/><use href="#hs343" transform="translate(3.9,164.4) rotate(2) scale(1.15)"/><use href="#hs343" transform="translate(86.0,416.4) rotate(-14) scale(1.15)"/><use href="#hs343" transform="translate(333.6,266.8) rotate(-12) scale(1.15)"/><use href="#hs343" transform="translate(326.6,596.7) rotate(7) scale(1.15)"/><use href="#hs343" transform="translate(333.0,216.4) rotate(18) scale(1.15)"/><use href="#hs343" transform="translate(72.3,132.4) rotate(19) scale(1.15)"/><use href="#hs343" transform="translate(215.5,543.2) rotate(-16) scale(1.15)"/><use href="#hs343" transform="translate(292.4,286.5) rotate(20) scale(1.15)"/><use href="#hs343" transform="translate(225.8,481.8) rotate(-11) scale(1.15)"/><use href="#hs343" transform="translate(260.3,285.6) rotate(6) scale(1.15)"/><use href="#hs343" transform="translate(136.5,571.5) rotate(-10) scale(1.15)"/><use href="#hs343" transform="translate(251.3,97.7) rotate(5) scale(1.15)"/><use href="#hs343" transform="translate(45.9,498.2) rotate(14) scale(1.15)"/><use href="#hs343" transform="translate(40.5,2.7) rotate(0) scale(1.15)"/><use href="#hs343" transform="translate(180.9,563.5) rotate(22) scale(1.15)"/><use href="#hs343" transform="translate(287.3,122.7) rotate(14) scale(1.15)"/><use href="#hs343" transform="translate(83.4,172.7) rotate(-17) scale(1.15)"/><use href="#hs343" transform="translate(40.5,549.1) rotate(-17) scale(1.15)"/><use href="#hs343" transform="translate(119.6,273.5) rotate(-22) scale(1.15)"/><use href="#hs343" transform="translate(172.1,318.4) rotate(-1) scale(1.15)"/><use href="#hs343" transform="translate(179.8,5.4) rotate(-7) scale(1.15)"/><use href="#hs343" transform="translate(150.2,105.7) rotate(20) scale(1.15)"/><use href="#hs343" transform="translate(-4.6,481.5) rotate(-5) scale(1.15)"/><use href="#hs343" transform="translate(109.7,310.2) rotate(3) scale(1.15)"/><use href="#hs343" transform="translate(31.7,335.8) rotate(23) scale(1.15)"/><use href="#hs343" transform="translate(211.4,302.4) rotate(-14) scale(1.15)"/><use href="#hs343" transform="translate(242.2,528.7) rotate(-4) scale(1.15)"/><use href="#hs343" transform="translate(328.5,152.4) rotate(2) scale(1.15)"/><use href="#hs343" transform="translate(37.2,263.7) rotate(-17) scale(1.15)"/><use href="#hs343" transform="translate(48.8,430.8) rotate(8) scale(1.15)"/><use href="#hs343" transform="translate(72.0,575.0) rotate(19) scale(1.15)"/><use href="#hs343" transform="translate(345.4,501.8) rotate(25) scale(1.15)"/><use href="#hs343" transform="translate(250.4,5.9) rotate(3) scale(1.15)"/><use href="#hs343" transform="translate(0.4,196.2) rotate(13) scale(1.15)"/><use href="#hs343" transform="translate(31.2,156.0) rotate(7) scale(1.15)"/><use href="#hs343" transform="translate(196.6,421.3) rotate(7) scale(1.15)"/><use href="#hs343" transform="translate(181.1,139.4) rotate(19) scale(1.15)"/><use href="#hs343" transform="translate(32.9,92.5) rotate(-24) scale(1.15)"/><use href="#hs343" transform="translate(11.9,117.1) rotate(-24) scale(1.15)"/><use href="#hs343" transform="translate(82.9,3.4) rotate(22) scale(1.15)"/><use href="#hs343" transform="translate(284.7,257.6) rotate(-13) scale(1.15)"/><use href="#hs343" transform="translate(137.7,206.0) rotate(18) scale(1.15)"/><use href="#hs343" transform="translate(303.0,403.0) rotate(-21) scale(1.15)"/><use href="#hs343" transform="translate(339.3,327.7) rotate(-10) scale(1.15)"/><use href="#hs343" transform="translate(-5.6,226.8) rotate(-18) scale(1.15)"/><use href="#hs343" transform="translate(8.8,7.7) rotate(3) scale(1.15)"/><use href="#hs343" transform="translate(260.4,395.1) rotate(3) scale(1.15)"/><use href="#hs343" transform="translate(310.6,376.7) rotate(-1) scale(1.15)"/><use href="#hs343" transform="translate(254.5,489.5) rotate(-17) scale(1.15)"/><use href="#hs343" transform="translate(236.4,416.9) rotate(-11) scale(1.15)"/><use href="#hs343" transform="translate(256.6,589.2) rotate(17) scale(1.15)"/><use href="#hs343" transform="translate(159.6,66.3) rotate(1) scale(1.15)"/><use href="#hs343" transform="translate(341.2,565.1) rotate(-6) scale(1.15)"/><use href="#hs343" transform="translate(76.1,541.6) rotate(-20) scale(1.15)"/><use href="#hs343" transform="translate(348.6,353.4) rotate(-23) scale(1.15)"/><use href="#hs343" transform="translate(99.7,444.8) rotate(13) scale(1.15)"/><use href="#hs343" transform="translate(226.9,177.5) rotate(-12) scale(1.15)"/><use href="#hs343" transform="translate(260.1,245.8) rotate(-19) scale(1.15)"/><use href="#hs343" transform="translate(140.9,313.7) rotate(20) scale(1.15)"/><use href="#hs343" transform="translate(303.9,7.3) rotate(12) scale(1.15)"/><use href="#hs343" transform="translate(131.8,130.4) rotate(-7) scale(1.15)"/><use href="#hs343" transform="translate(207.4,0.4) rotate(-9) scale(1.15)"/><use href="#hs343" transform="translate(334.4,387.2) rotate(1) scale(1.15)"/><use href="#hs343" transform="translate(338.3,184.1) rotate(1) scale(1.15)"/><use href="#hs343" transform="translate(98.7,574.7) rotate(10) scale(1.15)"/><use href="#hs343" transform="translate(312.8,533.0) rotate(8) scale(1.15)"/><use href="#hs343" transform="translate(336.3,120.5) rotate(-17) scale(1.15)"/><use href="#hs343" transform="translate(271.7,42.2) rotate(22) scale(1.15)"/><use href="#hs343" transform="translate(81.8,33.5) rotate(1) scale(1.15)"/><use href="#hs343" transform="translate(6.0,331.1) rotate(-19) scale(1.15)"/><use href="#hs343" transform="translate(199.3,193.1) rotate(10) scale(1.15)"/><use href="#hs343" transform="translate(134.6,599.4) rotate(-21) scale(1.15)"/><use href="#hs343" transform="translate(86.3,468.4) rotate(-12) scale(1.15)"/><use href="#hs343" transform="translate(205.6,372.2) rotate(-7) scale(1.15)"/><use href="#hs343" transform="translate(225.3,118.1) rotate(-12) scale(1.15)"/><use href="#hs343" transform="translate(104.8,118.1) rotate(0) scale(1.15)"/><use href="#hs343" transform="translate(291.6,65.8) rotate(1) scale(1.15)"/><use href="#hs343" transform="translate(206.8,329.5) rotate(9) scale(1.15)"/><use href="#hs343" transform="translate(143.1,349.4) rotate(-6) scale(1.15)"/><use href="#hs343" transform="translate(152.6,261.4) rotate(13) scale(1.15)"/><use href="#hs343" transform="translate(2.3,371.5) rotate(-6) scale(1.15)"/><use href="#hs343" transform="translate(319.2,94.7) rotate(24) scale(1.15)"/><use href="#hs343" transform="translate(303.9,332.7) rotate(-13) scale(1.15)"/><use href="#hs343" transform="translate(31.1,599.7) rotate(1) scale(1.15)"/><use href="#hs343" transform="translate(277.2,155.5) rotate(-25) scale(1.15)"/><use href="#hs343" transform="translate(326.7,441.4) rotate(14) scale(1.15)"/><use href="#hs343" transform="translate(273.9,313.2) rotate(20) scale(1.15)"/><use href="#hs343" transform="translate(88.2,385.6) rotate(11) scale(1.15)"/><use href="#hs343" transform="translate(241.4,443.4) rotate(12) scale(1.15)"/><use href="#hs343" transform="translate(294.9,489.3) rotate(-3) scale(1.15)"/><use href="#hs343" transform="translate(336.2,301.3) rotate(11) scale(1.15)"/><use href="#hs343" transform="translate(310.1,46.6) rotate(-7) scale(1.15)"/><use href="#hs343" transform="translate(59.0,393.2) rotate(-16) scale(1.15)"/><use href="#hs343" transform="translate(290.0,210.4) rotate(7) scale(1.15)"/><use href="#hs343" transform="translate(-5.0,434.3) rotate(-9) scale(1.15)"/><use href="#hs343" transform="translate(68.8,259.5) rotate(0) scale(1.15)"/><use href="#hs343" transform="translate(111.5,187.4) rotate(-21) scale(1.15)"/><use href="#hs343" transform="translate(269.0,551.6) rotate(-18) scale(1.15)"/><use href="#hs343" transform="translate(249.4,141.8) rotate(-18) scale(1.15)"/><use href="#hs343" transform="translate(85.2,69.7) rotate(16) scale(1.15)"/><use href="#hs343" transform="translate(106.9,544.9) rotate(12) scale(1.15)"/><use href="#hs343" transform="translate(243.4,56.7) rotate(19) scale(1.15)"/><use href="#hs343" transform="translate(50.3,34.7) rotate(-1) scale(1.15)"/><use href="#hs343" transform="translate(212.8,512.5) rotate(-1) scale(1.15)"/><use href="#hs343" transform="translate(150.3,375.0) rotate(-14) scale(1.15)"/><use href="#hs343" transform="translate(54.6,188.0) rotate(11) scale(1.15)"/><use href="#hs343" transform="translate(197.9,244.8) rotate(23) scale(1.15)"/><use href="#hs343" transform="translate(179.5,496.1) rotate(-19) scale(1.15)"/><use href="#hs343" transform="translate(248.0,209.8) rotate(20) scale(1.15)"/><use href="#hs343" transform="translate(132.4,46.5) rotate(8) scale(1.15)"/><use href="#hs343" transform="translate(117.9,-5.4) rotate(-1) scale(1.15)"/><use href="#hs343" transform="translate(86.7,327.3) rotate(-21) scale(1.15)"/><use href="#hs343" transform="translate(278.2,15.6) rotate(23) scale(1.15)"/><use href="#hs343" transform="translate(60.8,321.5) rotate(-1) scale(1.15)"/><use href="#hs343" transform="translate(191.0,395.0) rotate(-17) scale(1.15)"/><use href="#hs343" transform="translate(348.4,-2.8) rotate(2) scale(1.15)"/><use href="#hs343" transform="translate(162.0,434.2) rotate(23) scale(1.15)"/><use href="#hs343" transform="translate(275.3,370.9) rotate(-3) scale(1.15)"/><use href="#hs343" transform="translate(59.4,159.6) rotate(0) scale(1.15)"/><use href="#hs343" transform="translate(14.2,503.2) rotate(5) scale(1.15)"/><use href="#hs343" transform="translate(181.9,169.9) rotate(10) scale(1.15)"/><use href="#hs343" transform="translate(318.1,504.7) rotate(-20) scale(1.15)"/><use href="#hs343" transform="translate(-2.6,284.0) rotate(-23) scale(1.15)"/><use href="#hs343" transform="translate(200.8,59.8) rotate(5) scale(1.15)"/><use href="#hs343" transform="translate(266.6,76.4) rotate(-17) scale(1.15)"/><use href="#hs343" transform="translate(44.9,577.6) rotate(-22) scale(1.15)"/><use href="#hs343" transform="translate(119.8,378.3) rotate(-11) scale(1.15)"/><use href="#hs343" transform="translate(124.2,428.5) rotate(1) scale(1.15)"/><use href="#hs343" transform="translate(149.5,-3.8) rotate(-8) scale(1.15)"/><use href="#hs343" transform="translate(65.1,515.8) rotate(3) scale(1.15)"/><use href="#hs343" transform="translate(243.2,308.8) rotate(-9) scale(1.15)"/><use href="#hs343" transform="translate(310.4,242.7) rotate(13) scale(1.15)"/><use href="#hs343" transform="translate(342.3,538.5) rotate(22) scale(1.15)"/><use href="#hs343" transform="translate(244.8,562.1) rotate(24) scale(1.15)"/><use href="#hs343" transform="translate(168.7,240.7) rotate(16) scale(1.15)"/><use href="#hs343" transform="translate(266.1,465.6) rotate(18) scale(1.15)"/><use href="#hs343" transform="translate(193.4,110.3) rotate(4) scale(1.15)"/><use href="#hs343" transform="translate(230.3,282.8) rotate(-20) scale(1.15)"/><use href="#hs343" transform="translate(149.7,548.0) rotate(2) scale(1.15)"/><use href="#hs343" transform="translate(232.7,384.9) rotate(7) scale(1.15)"/><use href="#hs343" transform="translate(51.6,239.4) rotate(-6) scale(1.15)"/><use href="#hs343" transform="translate(-5.5,37.5) rotate(24) scale(1.15)"/><use href="#hs343" transform="translate(158.7,22.2) rotate(25) scale(1.15)"/><use href="#hs343" transform="translate(72.5,601.8) rotate(-21) scale(1.15)"/><use href="#hs343" transform="translate(121.7,472.1) rotate(21) scale(1.15)"/><use href="#hs343" transform="translate(347.5,242.1) rotate(21) scale(1.15)"/><use href="#hs343" transform="translate(208.6,461.2) rotate(24) scale(1.15)"/><use href="#hs343" transform="translate(108.4,600.2) rotate(-19) scale(1.15)"/><use href="#hs343" transform="translate(271.7,191.3) rotate(-2) scale(1.15)"/><use href="#hs343" transform="translate(99.2,519.6) rotate(6) scale(1.15)"/><use href="#hs343" transform="translate(179.6,344.3) rotate(0) scale(1.15)"/><use href="#hs343" transform="translate(155.4,148.7) rotate(24) scale(1.15)"/><use href="#hs343" transform="translate(343.1,472.2) rotate(0) scale(1.15)"/><use href="#hs343" transform="translate(104.1,50.5) rotate(-4) scale(1.15)"/><use href="#hs343" transform="translate(134.7,81.6) rotate(-9) scale(1.15)"/><use href="#hs343" transform="translate(20.5,429.0) rotate(16) scale(1.15)"/><use href="#hs343" transform="translate(110.0,222.6) rotate(3) scale(1.15)"/><use href="#hs343" transform="translate(33.8,522.1) rotate(-12) scale(1.15)"/><use href="#hs343" transform="translate(311.6,194.7) rotate(-25) scale(1.15)"/><use href="#hs343" transform="translate(35.9,407.5) rotate(9) scale(1.15)"/><use href="#hs343" transform="translate(1.4,600.3) rotate(3) scale(1.15)"/></g></svg>
</div>
<div class="a" style="left:347px;top:374px;width:933px;height:598px;background:#353535;overflow:hidden">
<svg class="a" style="left:0;top:0" width="933" height="598"><defs><filter id="bl933" x="-10%" y="-10%" width="120%" height="120%"><feGaussianBlur stdDeviation="0.8"/></filter><path id="hs933" d="M-2,-6 L-2.8,6 M2.8,-6 L2,6 M-6,-2.2 L6,-2.2 M-6,2.2 L6,2.2" stroke="#444444" stroke-width="2.3" fill="none"/></defs><g filter="url(#bl933)"><use href="#hs933" transform="translate(705.6,403.7) rotate(-6) scale(1.15)"/><use href="#hs933" transform="translate(214.8,336.8) rotate(-14) scale(1.15)"/><use href="#hs933" transform="translate(513.6,342.8) rotate(-12) scale(1.15)"/><use href="#hs933" transform="translate(377.3,235.0) rotate(17) scale(1.15)"/><use href="#hs933" transform="translate(460.5,43.3) rotate(14) scale(1.15)"/><use href="#hs933" transform="translate(795.9,373.2) rotate(3) scale(1.15)"/><use href="#hs933" transform="translate(63.9,206.2) rotate(11) scale(1.15)"/><use href="#hs933" transform="translate(709.6,558.4) rotate(-19) scale(1.15)"/><use href="#hs933" transform="translate(4.2,27.4) rotate(14) scale(1.15)"/><use href="#hs933" transform="translate(230.6,432.1) rotate(-23) scale(1.15)"/><use href="#hs933" transform="translate(841.3,41.4) rotate(6) scale(1.15)"/><use href="#hs933" transform="translate(201.1,111.1) rotate(11) scale(1.15)"/><use href="#hs933" transform="translate(239.0,494.3) rotate(-12) scale(1.15)"/><use href="#hs933" transform="translate(209.1,139.6) rotate(-15) scale(1.15)"/><use href="#hs933" transform="translate(925.3,600.0) rotate(6) scale(1.15)"/><use href="#hs933" transform="translate(822.1,496.5) rotate(-5) scale(1.15)"/><use href="#hs933" transform="translate(711.2,-1.6) rotate(10) scale(1.15)"/><use href="#hs933" transform="translate(584.7,354.3) rotate(17) scale(1.15)"/><use href="#hs933" transform="translate(495.0,206.6) rotate(-2) scale(1.15)"/><use href="#hs933" transform="translate(868.9,383.8) rotate(20) scale(1.15)"/><use href="#hs933" transform="translate(217.2,307.3) rotate(22) scale(1.15)"/><use href="#hs933" transform="translate(921.6,128.5) rotate(21) scale(1.15)"/><use href="#hs933" transform="translate(256.0,464.8) rotate(-4) scale(1.15)"/><use href="#hs933" transform="translate(105.0,181.3) rotate(-25) scale(1.15)"/><use href="#hs933" transform="translate(830.6,82.8) rotate(-17) scale(1.15)"/><use href="#hs933" transform="translate(180.9,23.0) rotate(-18) scale(1.15)"/><use href="#hs933" transform="translate(180.7,290.5) rotate(-9) scale(1.15)"/><use href="#hs933" transform="translate(550.3,372.7) rotate(16) scale(1.15)"/><use href="#hs933" transform="translate(178.0,247.7) rotate(-5) scale(1.15)"/><use href="#hs933" transform="translate(579.8,437.0) rotate(-11) scale(1.15)"/><use href="#hs933" transform="translate(601.2,530.8) rotate(1) scale(1.15)"/><use href="#hs933" transform="translate(745.1,387.7) rotate(14) scale(1.15)"/><use href="#hs933" transform="translate(510.4,455.9) rotate(-14) scale(1.15)"/><use href="#hs933" transform="translate(85.7,593.7) rotate(-13) scale(1.15)"/><use href="#hs933" transform="translate(0.3,89.1) rotate(-4) scale(1.15)"/><use href="#hs933" transform="translate(376.0,414.7) rotate(7) scale(1.15)"/><use href="#hs933" transform="translate(365.1,482.7) rotate(-25) scale(1.15)"/><use href="#hs933" transform="translate(934.4,261.4) rotate(0) scale(1.15)"/><use href="#hs933" transform="translate(177.0,201.8) rotate(-11) scale(1.15)"/><use href="#hs933" transform="translate(413.1,215.2) rotate(-10) scale(1.15)"/><use href="#hs933" transform="translate(686.0,264.6) rotate(25) scale(1.15)"/><use href="#hs933" transform="translate(739.1,583.3) rotate(3) scale(1.15)"/><use href="#hs933" transform="translate(749.3,137.5) rotate(-17) scale(1.15)"/><use href="#hs933" transform="translate(173.5,488.4) rotate(-8) scale(1.15)"/><use href="#hs933" transform="translate(525.2,85.1) rotate(-4) scale(1.15)"/><use href="#hs933" transform="translate(46.8,593.4) rotate(-3) scale(1.15)"/><use href="#hs933" transform="translate(655.0,88.1) rotate(-5) scale(1.15)"/><use href="#hs933" transform="translate(867.8,182.9) rotate(22) scale(1.15)"/><use href="#hs933" transform="translate(658.9,124.4) rotate(-22) scale(1.15)"/><use href="#hs933" transform="translate(894.3,65.3) rotate(16) scale(1.15)"/><use href="#hs933" transform="translate(301.1,299.2) rotate(20) scale(1.15)"/><use href="#hs933" transform="translate(285.1,321.5) rotate(-16) scale(1.15)"/><use href="#hs933" transform="translate(714.6,24.2) rotate(-20) scale(1.15)"/><use href="#hs933" transform="translate(105.2,510.2) rotate(3) scale(1.15)"/><use href="#hs933" transform="translate(379.0,19.7) rotate(-19) scale(1.15)"/><use href="#hs933" transform="translate(386.1,189.8) rotate(-15) scale(1.15)"/><use href="#hs933" transform="translate(688.4,221.2) rotate(18) scale(1.15)"/><use href="#hs933" transform="translate(765.7,56.0) rotate(-8) scale(1.15)"/><use href="#hs933" transform="translate(180.7,355.7) rotate(-9) scale(1.15)"/><use href="#hs933" transform="translate(519.5,178.2) rotate(-20) scale(1.15)"/><use href="#hs933" transform="translate(260.6,359.1) rotate(-14) scale(1.15)"/><use href="#hs933" transform="translate(162.9,449.7) rotate(-24) scale(1.15)"/><use href="#hs933" transform="translate(912.0,372.7) rotate(24) scale(1.15)"/><use href="#hs933" transform="translate(649.5,440.4) rotate(-13) scale(1.15)"/><use href="#hs933" transform="translate(808.5,237.2) rotate(4) scale(1.15)"/><use href="#hs933" transform="translate(896.5,0.2) rotate(14) scale(1.15)"/><use href="#hs933" transform="translate(317.8,21.9) rotate(14) scale(1.15)"/><use href="#hs933" transform="translate(112.1,327.7) rotate(-21) scale(1.15)"/><use href="#hs933" transform="translate(330.1,59.7) rotate(-14) scale(1.15)"/><use href="#hs933" transform="translate(136.4,288.6) rotate(21) scale(1.15)"/><use href="#hs933" transform="translate(424.9,417.9) rotate(-16) scale(1.15)"/><use href="#hs933" transform="translate(575.5,150.2) rotate(-8) scale(1.15)"/><use href="#hs933" transform="translate(768.0,499.8) rotate(-5) scale(1.15)"/><use href="#hs933" transform="translate(372.0,574.3) rotate(14) scale(1.15)"/><use href="#hs933" transform="translate(661.6,6.5) rotate(14) scale(1.15)"/><use href="#hs933" transform="translate(324.7,474.9) rotate(-3) scale(1.15)"/><use href="#hs933" transform="translate(76.9,249.6) rotate(7) scale(1.15)"/><use href="#hs933" transform="translate(601.2,204.1) rotate(-12) scale(1.15)"/><use href="#hs933" transform="translate(736.7,480.6) rotate(-19) scale(1.15)"/><use href="#hs933" transform="translate(477.4,68.2) rotate(16) scale(1.15)"/><use href="#hs933" transform="translate(782.1,528.9) rotate(-25) scale(1.15)"/><use href="#hs933" transform="translate(241.7,165.9) rotate(25) scale(1.15)"/><use href="#hs933" transform="translate(211.7,65.3) rotate(-2) scale(1.15)"/><use href="#hs933" transform="translate(303.5,602.4) rotate(-22) scale(1.15)"/><use href="#hs933" transform="translate(525.1,8.3) rotate(-17) scale(1.15)"/><use href="#hs933" transform="translate(92.6,383.5) rotate(-25) scale(1.15)"/><use href="#hs933" transform="translate(682.7,84.9) rotate(-3) scale(1.15)"/><use href="#hs933" transform="translate(465.7,459.3) rotate(-1) scale(1.15)"/><use href="#hs933" transform="translate(177.3,172.7) rotate(16) scale(1.15)"/><use href="#hs933" transform="translate(32.6,478.4) rotate(-24) scale(1.15)"/><use href="#hs933" transform="translate(493.7,138.4) rotate(0) scale(1.15)"/><use href="#hs933" transform="translate(871.2,522.7) rotate(3) scale(1.15)"/><use href="#hs933" transform="translate(348.9,147.1) rotate(-23) scale(1.15)"/><use href="#hs933" transform="translate(352.8,26.9) rotate(-2) scale(1.15)"/><use href="#hs933" transform="translate(377.3,508.2) rotate(-6) scale(1.15)"/><use href="#hs933" transform="translate(406.8,438.0) rotate(12) scale(1.15)"/><use href="#hs933" transform="translate(869.5,448.2) rotate(0) scale(1.15)"/><use href="#hs933" transform="translate(404.1,548.5) rotate(1) scale(1.15)"/><use href="#hs933" transform="translate(759.9,278.8) rotate(14) scale(1.15)"/><use href="#hs933" transform="translate(884.9,281.1) rotate(-18) scale(1.15)"/><use href="#hs933" transform="translate(126.2,595.1) rotate(-13) scale(1.15)"/><use href="#hs933" transform="translate(547.7,157.0) rotate(-14) scale(1.15)"/><use href="#hs933" transform="translate(103.6,470.1) rotate(16) scale(1.15)"/><use href="#hs933" transform="translate(205.6,211.7) rotate(21) scale(1.15)"/><use href="#hs933" transform="translate(296.8,486.7) rotate(-11) scale(1.15)"/><use href="#hs933" transform="translate(538.6,45.1) rotate(11) scale(1.15)"/><use href="#hs933" transform="translate(275.1,522.4) rotate(11) scale(1.15)"/><use href="#hs933" transform="translate(789.2,15.7) rotate(18) scale(1.15)"/><use href="#hs933" transform="translate(54.1,265.5) rotate(-19) scale(1.15)"/><use href="#hs933" transform="translate(793.1,335.8) rotate(-13) scale(1.15)"/><use href="#hs933" transform="translate(550.8,185.3) rotate(23) scale(1.15)"/><use href="#hs933" transform="translate(452.5,273.3) rotate(-3) scale(1.15)"/><use href="#hs933" transform="translate(365.5,315.6) rotate(7) scale(1.15)"/><use href="#hs933" transform="translate(794.1,431.1) rotate(-12) scale(1.15)"/><use href="#hs933" transform="translate(253.0,399.3) rotate(23) scale(1.15)"/><use href="#hs933" transform="translate(134.6,14.1) rotate(23) scale(1.15)"/><use href="#hs933" transform="translate(262.1,40.9) rotate(-4) scale(1.15)"/><use href="#hs933" transform="translate(404.2,321.5) rotate(20) scale(1.15)"/><use href="#hs933" transform="translate(622.8,221.7) rotate(19) scale(1.15)"/><use href="#hs933" transform="translate(220.8,261.6) rotate(4) scale(1.15)"/><use href="#hs933" transform="translate(847.4,542.8) rotate(3) scale(1.15)"/><use href="#hs933" transform="translate(126.0,120.3) rotate(20) scale(1.15)"/><use href="#hs933" transform="translate(337.4,381.3) rotate(16) scale(1.15)"/><use href="#hs933" transform="translate(742.2,8.0) rotate(-1) scale(1.15)"/><use href="#hs933" transform="translate(425.8,271.8) rotate(-21) scale(1.15)"/><use href="#hs933" transform="translate(855.4,477.1) rotate(22) scale(1.15)"/><use href="#hs933" transform="translate(629.7,38.1) rotate(-20) scale(1.15)"/><use href="#hs933" transform="translate(734.8,350.1) rotate(14) scale(1.15)"/><use href="#hs933" transform="translate(936.6,192.2) rotate(-24) scale(1.15)"/><use href="#hs933" transform="translate(429.7,366.8) rotate(-18) scale(1.15)"/><use href="#hs933" transform="translate(728.3,519.9) rotate(25) scale(1.15)"/><use href="#hs933" transform="translate(671.1,412.6) rotate(4) scale(1.15)"/><use href="#hs933" transform="translate(559.3,304.2) rotate(1) scale(1.15)"/><use href="#hs933" transform="translate(819.8,451.0) rotate(2) scale(1.15)"/><use href="#hs933" transform="translate(553.5,595.2) rotate(13) scale(1.15)"/><use href="#hs933" transform="translate(571.1,533.7) rotate(-1) scale(1.15)"/><use href="#hs933" transform="translate(389.3,284.4) rotate(-9) scale(1.15)"/><use href="#hs933" transform="translate(676.7,551.2) rotate(18) scale(1.15)"/><use href="#hs933" transform="translate(301.1,181.3) rotate(10) scale(1.15)"/><use href="#hs933" transform="translate(57.5,129.7) rotate(-21) scale(1.15)"/><use href="#hs933" transform="translate(35.5,208.1) rotate(1) scale(1.15)"/><use href="#hs933" transform="translate(716.3,311.6) rotate(2) scale(1.15)"/><use href="#hs933" transform="translate(454.6,524.4) rotate(-7) scale(1.15)"/><use href="#hs933" transform="translate(739.8,164.2) rotate(-1) scale(1.15)"/><use href="#hs933" transform="translate(0.2,321.5) rotate(-18) scale(1.15)"/><use href="#hs933" transform="translate(657.0,313.5) rotate(-24) scale(1.15)"/><use href="#hs933" transform="translate(7.2,258.8) rotate(22) scale(1.15)"/><use href="#hs933" transform="translate(105.6,430.6) rotate(-8) scale(1.15)"/><use href="#hs933" transform="translate(896.9,188.5) rotate(-6) scale(1.15)"/><use href="#hs933" transform="translate(191.6,540.0) rotate(9) scale(1.15)"/><use href="#hs933" transform="translate(870.7,124.4) rotate(9) scale(1.15)"/><use href="#hs933" transform="translate(611.3,408.9) rotate(-8) scale(1.15)"/><use href="#hs933" transform="translate(7.7,208.1) rotate(-11) scale(1.15)"/><use href="#hs933" transform="translate(853.0,293.4) rotate(-11) scale(1.15)"/><use href="#hs933" transform="translate(504.0,526.4) rotate(10) scale(1.15)"/><use href="#hs933" transform="translate(878.8,222.4) rotate(20) scale(1.15)"/><use href="#hs933" transform="translate(399.1,258.8) rotate(20) scale(1.15)"/><use href="#hs933" transform="translate(176.1,382.6) rotate(-20) scale(1.15)"/><use href="#hs933" transform="translate(374.5,127.2) rotate(-11) scale(1.15)"/><use href="#hs933" transform="translate(674.1,293.9) rotate(-25) scale(1.15)"/><use href="#hs933" transform="translate(808.0,544.6) rotate(-21) scale(1.15)"/><use href="#hs933" transform="translate(435.2,577.2) rotate(3) scale(1.15)"/><use href="#hs933" transform="translate(606.7,259.5) rotate(0) scale(1.15)"/><use href="#hs933" transform="translate(628.5,319.6) rotate(23) scale(1.15)"/><use href="#hs933" transform="translate(173.9,320.9) rotate(20) scale(1.15)"/><use href="#hs933" transform="translate(258.0,284.6) rotate(7) scale(1.15)"/><use href="#hs933" transform="translate(301.5,553.8) rotate(9) scale(1.15)"/><use href="#hs933" transform="translate(274.4,184.4) rotate(14) scale(1.15)"/><use href="#hs933" transform="translate(247.4,547.2) rotate(-23) scale(1.15)"/><use href="#hs933" transform="translate(584.5,322.3) rotate(-15) scale(1.15)"/><use href="#hs933" transform="translate(57.8,386.4) rotate(7) scale(1.15)"/><use href="#hs933" transform="translate(182.6,564.5) rotate(14) scale(1.15)"/><use href="#hs933" transform="translate(374.5,95.4) rotate(-4) scale(1.15)"/><use href="#hs933" transform="translate(527.5,126.6) rotate(14) scale(1.15)"/><use href="#hs933" transform="translate(338.7,264.9) rotate(-8) scale(1.15)"/><use href="#hs933" transform="translate(355.7,596.1) rotate(5) scale(1.15)"/><use href="#hs933" transform="translate(686.9,457.1) rotate(5) scale(1.15)"/><use href="#hs933" transform="translate(319.1,400.6) rotate(16) scale(1.15)"/><use href="#hs933" transform="translate(173.2,82.9) rotate(18) scale(1.15)"/><use href="#hs933" transform="translate(205.5,411.1) rotate(-5) scale(1.15)"/><use href="#hs933" transform="translate(822.8,276.4) rotate(-16) scale(1.15)"/><use href="#hs933" transform="translate(390.2,156.9) rotate(-19) scale(1.15)"/><use href="#hs933" transform="translate(63.6,496.7) rotate(4) scale(1.15)"/><use href="#hs933" transform="translate(465.1,149.3) rotate(-14) scale(1.15)"/><use href="#hs933" transform="translate(404.8,490.2) rotate(-13) scale(1.15)"/><use href="#hs933" transform="translate(745.9,102.9) rotate(10) scale(1.15)"/><use href="#hs933" transform="translate(509.6,587.8) rotate(8) scale(1.15)"/><use href="#hs933" transform="translate(782.3,205.8) rotate(-2) scale(1.15)"/><use href="#hs933" transform="translate(297.9,77.1) rotate(-16) scale(1.15)"/><use href="#hs933" transform="translate(2.6,528.6) rotate(0) scale(1.15)"/><use href="#hs933" transform="translate(524.7,412.8) rotate(6) scale(1.15)"/><use href="#hs933" transform="translate(358.3,440.5) rotate(-12) scale(1.15)"/><use href="#hs933" transform="translate(170.0,134.4) rotate(17) scale(1.15)"/><use href="#hs933" transform="translate(898.0,473.6) rotate(19) scale(1.15)"/><use href="#hs933" transform="translate(336.4,352.2) rotate(8) scale(1.15)"/><use href="#hs933" transform="translate(646.9,355.8) rotate(-20) scale(1.15)"/><use href="#hs933" transform="translate(132.3,248.1) rotate(-4) scale(1.15)"/><use href="#hs933" transform="translate(374.7,370.5) rotate(-21) scale(1.15)"/><use href="#hs933" transform="translate(718.6,198.0) rotate(-25) scale(1.15)"/><use href="#hs933" transform="translate(282.8,392.7) rotate(-4) scale(1.15)"/><use href="#hs933" transform="translate(225.1,42.2) rotate(1) scale(1.15)"/><use href="#hs933" transform="translate(819.4,407.6) rotate(2) scale(1.15)"/><use href="#hs933" transform="translate(269.6,583.9) rotate(-4) scale(1.15)"/><use href="#hs933" transform="translate(586.1,500.8) rotate(10) scale(1.15)"/><use href="#hs933" transform="translate(784.7,141.9) rotate(-22) scale(1.15)"/><use href="#hs933" transform="translate(621.9,-3.9) rotate(-2) scale(1.15)"/><use href="#hs933" transform="translate(623.1,110.4) rotate(15) scale(1.15)"/><use href="#hs933" transform="translate(490.4,178.9) rotate(-13) scale(1.15)"/><use href="#hs933" transform="translate(929.4,516.1) rotate(-9) scale(1.15)"/><use href="#hs933" transform="translate(304.5,154.1) rotate(-10) scale(1.15)"/><use href="#hs933" transform="translate(860.7,578.8) rotate(-9) scale(1.15)"/><use href="#hs933" transform="translate(85.1,293.1) rotate(-7) scale(1.15)"/><use href="#hs933" transform="translate(667.8,603.8) rotate(-24) scale(1.15)"/><use href="#hs933" transform="translate(21.7,374.3) rotate(17) scale(1.15)"/><use href="#hs933" transform="translate(112.3,558.5) rotate(-2) scale(1.15)"/><use href="#hs933" transform="translate(495.5,491.1) rotate(-15) scale(1.15)"/><use href="#hs933" transform="translate(515.9,559.0) rotate(20) scale(1.15)"/><use href="#hs933" transform="translate(737.9,296.3) rotate(10) scale(1.15)"/><use href="#hs933" transform="translate(82.1,156.8) rotate(-2) scale(1.15)"/><use href="#hs933" transform="translate(562.4,471.6) rotate(20) scale(1.15)"/><use href="#hs933" transform="translate(245.9,329.0) rotate(-5) scale(1.15)"/><use href="#hs933" transform="translate(437.0,99.7) rotate(21) scale(1.15)"/><use href="#hs933" transform="translate(236.5,114.2) rotate(-6) scale(1.15)"/><use href="#hs933" transform="translate(237.0,8.8) rotate(7) scale(1.15)"/><use href="#hs933" transform="translate(495.7,13.1) rotate(-21) scale(1.15)"/><use href="#hs933" transform="translate(488.7,416.1) rotate(-20) scale(1.15)"/><use href="#hs933" transform="translate(571.9,229.1) rotate(-9) scale(1.15)"/><use href="#hs933" transform="translate(591.3,50.2) rotate(-9) scale(1.15)"/><use href="#hs933" transform="translate(911.2,563.4) rotate(-15) scale(1.15)"/><use href="#hs933" transform="translate(642.6,383.5) rotate(-16) scale(1.15)"/><use href="#hs933" transform="translate(831.5,209.5) rotate(-6) scale(1.15)"/><use href="#hs933" transform="translate(189.9,433.0) rotate(11) scale(1.15)"/><use href="#hs933" transform="translate(333.0,125.4) rotate(-1) scale(1.15)"/><use href="#hs933" transform="translate(233.0,237.6) rotate(3) scale(1.15)"/><use href="#hs933" transform="translate(621.1,151.8) rotate(6) scale(1.15)"/><use href="#hs933" transform="translate(651.4,489.0) rotate(0) scale(1.15)"/><use href="#hs933" transform="translate(569.9,103.2) rotate(17) scale(1.15)"/><use href="#hs933" transform="translate(706.7,61.6) rotate(-1) scale(1.15)"/><use href="#hs933" transform="translate(484.0,337.6) rotate(1) scale(1.15)"/><use href="#hs933" transform="translate(725.1,454.2) rotate(-19) scale(1.15)"/><use href="#hs933" transform="translate(545.4,222.6) rotate(-1) scale(1.15)"/><use href="#hs933" transform="translate(924.2,416.0) rotate(8) scale(1.15)"/><use href="#hs933" transform="translate(97.8,87.2) rotate(12) scale(1.15)"/><use href="#hs933" transform="translate(66.2,557.5) rotate(18) scale(1.15)"/><use href="#hs933" transform="translate(775.5,97.5) rotate(14) scale(1.15)"/><use href="#hs933" transform="translate(614.4,576.6) rotate(-6) scale(1.15)"/><use href="#hs933" transform="translate(353.3,527.1) rotate(15) scale(1.15)"/><use href="#hs933" transform="translate(318.1,575.2) rotate(12) scale(1.15)"/><use href="#hs933" transform="translate(308.1,349.9) rotate(-22) scale(1.15)"/><use href="#hs933" transform="translate(918.0,158.7) rotate(-7) scale(1.15)"/><use href="#hs933" transform="translate(617.8,447.1) rotate(-13) scale(1.15)"/><use href="#hs933" transform="translate(736.7,553.6) rotate(-5) scale(1.15)"/><use href="#hs933" transform="translate(136.8,444.2) rotate(-21) scale(1.15)"/><use href="#hs933" transform="translate(932.6,11.8) rotate(-3) scale(1.15)"/><use href="#hs933" transform="translate(411.9,590.0) rotate(12) scale(1.15)"/><use href="#hs933" transform="translate(562.4,410.1) rotate(20) scale(1.15)"/><use href="#hs933" transform="translate(190.0,50.9) rotate(-22) scale(1.15)"/><use href="#hs933" transform="translate(256.0,221.8) rotate(-16) scale(1.15)"/><use href="#hs933" transform="translate(911.1,234.6) rotate(-14) scale(1.15)"/><use href="#hs933" transform="translate(504.1,232.1) rotate(9) scale(1.15)"/><use href="#hs933" transform="translate(492.3,385.9) rotate(19) scale(1.15)"/><use href="#hs933" transform="translate(-3.2,486.4) rotate(0) scale(1.15)"/><use href="#hs933" transform="translate(884.8,356.1) rotate(1) scale(1.15)"/><use href="#hs933" transform="translate(784.8,304.5) rotate(22) scale(1.15)"/><use href="#hs933" transform="translate(240.7,521.5) rotate(25) scale(1.15)"/><use href="#hs933" transform="translate(542.9,522.8) rotate(12) scale(1.15)"/><use href="#hs933" transform="translate(229.7,462.3) rotate(-14) scale(1.15)"/><use href="#hs933" transform="translate(649.1,155.0) rotate(-10) scale(1.15)"/><use href="#hs933" transform="translate(433.6,465.7) rotate(-21) scale(1.15)"/><use href="#hs933" transform="translate(224.9,593.0) rotate(24) scale(1.15)"/><use href="#hs933" transform="translate(349.3,210.6) rotate(-11) scale(1.15)"/><use href="#hs933" transform="translate(165.4,530.1) rotate(23) scale(1.15)"/><use href="#hs933" transform="translate(35.8,284.5) rotate(-4) scale(1.15)"/><use href="#hs933" transform="translate(36.3,409.0) rotate(-17) scale(1.15)"/><use href="#hs933" transform="translate(395.1,55.7) rotate(16) scale(1.15)"/><use href="#hs933" transform="translate(836.8,331.8) rotate(1) scale(1.15)"/><use href="#hs933" transform="translate(134.1,198.0) rotate(-23) scale(1.15)"/><use href="#hs933" transform="translate(126.3,366.3) rotate(4) scale(1.15)"/><use href="#hs933" transform="translate(256.5,78.4) rotate(-9) scale(1.15)"/><use href="#hs933" transform="translate(307.6,273.3) rotate(-9) scale(1.15)"/><use href="#hs933" transform="translate(44.6,330.4) rotate(16) scale(1.15)"/><use href="#hs933" transform="translate(65.7,27.2) rotate(8) scale(1.15)"/><use href="#hs933" transform="translate(-2.8,59.3) rotate(-24) scale(1.15)"/><use href="#hs933" transform="translate(896.8,595.3) rotate(-21) scale(1.15)"/><use href="#hs933" transform="translate(-1.7,421.4) rotate(-6) scale(1.15)"/><use href="#hs933" transform="translate(146.7,330.6) rotate(-11) scale(1.15)"/><use href="#hs933" transform="translate(770.4,553.4) rotate(-17) scale(1.15)"/><use href="#hs933" transform="translate(38.8,449.5) rotate(3) scale(1.15)"/><use href="#hs933" transform="translate(521.4,383.0) rotate(13) scale(1.15)"/><use href="#hs933" transform="translate(426.3,60.3) rotate(-6) scale(1.15)"/><use href="#hs933" transform="translate(38.8,547.1) rotate(-16) scale(1.15)"/><use href="#hs933" transform="translate(701.5,165.1) rotate(-24) scale(1.15)"/><use href="#hs933" transform="translate(842.5,248.6) rotate(1) scale(1.15)"/><use href="#hs933" transform="translate(30.2,54.2) rotate(23) scale(1.15)"/><use href="#hs933" transform="translate(757.4,213.7) rotate(6) scale(1.15)"/><use href="#hs933" transform="translate(701.6,493.8) rotate(-7) scale(1.15)"/><use href="#hs933" transform="translate(629.6,191.0) rotate(25) scale(1.15)"/><use href="#hs933" transform="translate(271.5,153.1) rotate(-19) scale(1.15)"/><use href="#hs933" transform="translate(333.3,95.8) rotate(-2) scale(1.15)"/><use href="#hs933" transform="translate(777.3,241.2) rotate(-13) scale(1.15)"/><use href="#hs933" transform="translate(890.5,500.6) rotate(-25) scale(1.15)"/><use href="#hs933" transform="translate(779.2,581.4) rotate(11) scale(1.15)"/><use href="#hs933" transform="translate(136.0,546.8) rotate(-13) scale(1.15)"/><use href="#hs933" transform="translate(579.6,603.7) rotate(-15) scale(1.15)"/><use href="#hs933" transform="translate(779.4,170.0) rotate(-25) scale(1.15)"/><use href="#hs933" transform="translate(327.4,305.0) rotate(-10) scale(1.15)"/><use href="#hs933" transform="translate(273.3,254.6) rotate(10) scale(1.15)"/><use href="#hs933" transform="translate(755.6,461.1) rotate(15) scale(1.15)"/><use href="#hs933" transform="translate(732.0,261.7) rotate(6) scale(1.15)"/><use href="#hs933" transform="translate(412.6,178.6) rotate(8) scale(1.15)"/><use href="#hs933" transform="translate(36.9,154.6) rotate(-10) scale(1.15)"/><use href="#hs933" transform="translate(304.1,444.0) rotate(22) scale(1.15)"/><use href="#hs933" transform="translate(763.8,325.9) rotate(-18) scale(1.15)"/><use href="#hs933" transform="translate(579.5,259.3) rotate(22) scale(1.15)"/><use href="#hs933" transform="translate(623.6,484.0) rotate(-25) scale(1.15)"/><use href="#hs933" transform="translate(202.9,379.7) rotate(-1) scale(1.15)"/><use href="#hs933" transform="translate(477.1,245.7) rotate(-10) scale(1.15)"/><use href="#hs933" transform="translate(512.7,41.6) rotate(8) scale(1.15)"/><use href="#hs933" transform="translate(134.5,520.3) rotate(2) scale(1.15)"/><use href="#hs933" transform="translate(798.9,477.8) rotate(-8) scale(1.15)"/><use href="#hs933" transform="translate(655.7,190.4) rotate(21) scale(1.15)"/><use href="#hs933" transform="translate(829.4,109.5) rotate(-16) scale(1.15)"/><use href="#hs933" transform="translate(30.1,106.8) rotate(13) scale(1.15)"/><use href="#hs933" transform="translate(171.3,600.5) rotate(-21) scale(1.15)"/><use href="#hs933" transform="translate(427.1,245.3) rotate(-23) scale(1.15)"/><use href="#hs933" transform="translate(532.0,295.2) rotate(-9) scale(1.15)"/><use href="#hs933" transform="translate(812.0,166.1) rotate(-18) scale(1.15)"/><use href="#hs933" transform="translate(651.3,279.7) rotate(21) scale(1.15)"/><use href="#hs933" transform="translate(99.8,126.7) rotate(-24) scale(1.15)"/><use href="#hs933" transform="translate(719.4,134.6) rotate(-20) scale(1.15)"/><use href="#hs933" transform="translate(659.5,47.3) rotate(21) scale(1.15)"/><use href="#hs933" transform="translate(426.5,147.4) rotate(-7) scale(1.15)"/><use href="#hs933" transform="translate(868.7,53.0) rotate(20) scale(1.15)"/><use href="#hs933" transform="translate(161.1,407.5) rotate(-1) scale(1.15)"/><use href="#hs933" transform="translate(397.1,-4.4) rotate(-24) scale(1.15)"/><use href="#hs933" transform="translate(586.2,81.9) rotate(-25) scale(1.15)"/><use href="#hs933" transform="translate(557.1,556.3) rotate(-13) scale(1.15)"/><use href="#hs933" transform="translate(888.8,328.6) rotate(-8) scale(1.15)"/><use href="#hs933" transform="translate(802.4,93.9) rotate(12) scale(1.15)"/><use href="#hs933" transform="translate(807.1,-3.3) rotate(-6) scale(1.15)"/><use href="#hs933" transform="translate(856.3,155.0) rotate(9) scale(1.15)"/><use href="#hs933" transform="translate(280.0,-4.8) rotate(-16) scale(1.15)"/><use href="#hs933" transform="translate(233.6,205.0) rotate(22) scale(1.15)"/><use href="#hs933" transform="translate(363.6,50.7) rotate(-20) scale(1.15)"/><use href="#hs933" transform="translate(477.9,601.8) rotate(-20) scale(1.15)"/><use href="#hs933" transform="translate(837.9,596.0) rotate(4) scale(1.15)"/><use href="#hs933" transform="translate(687.7,335.6) rotate(-7) scale(1.15)"/><use href="#hs933" transform="translate(471.3,-2.0) rotate(-1) scale(1.15)"/><use href="#hs933" transform="translate(923.3,455.8) rotate(21) scale(1.15)"/><use href="#hs933" transform="translate(930.3,334.9) rotate(-7) scale(1.15)"/><use href="#hs933" transform="translate(648.1,242.2) rotate(18) scale(1.15)"/><use href="#hs933" transform="translate(-4.4,116.7) rotate(2) scale(1.15)"/><use href="#hs933" transform="translate(494.0,103.0) rotate(-3) scale(1.15)"/><use href="#hs933" transform="translate(99.3,31.6) rotate(0) scale(1.15)"/><use href="#hs933" transform="translate(829.5,523.8) rotate(-25) scale(1.15)"/><use href="#hs933" transform="translate(300.9,48.7) rotate(-1) scale(1.15)"/><use href="#hs933" transform="translate(298.0,218.3) rotate(22) scale(1.15)"/><use href="#hs933" transform="translate(685.8,42.8) rotate(7) scale(1.15)"/><use href="#hs933" transform="translate(796.1,265.4) rotate(11) scale(1.15)"/><use href="#hs933" transform="translate(700.8,587.4) rotate(3) scale(1.15)"/><use href="#hs933" transform="translate(443.3,2.0) rotate(24) scale(1.15)"/><use href="#hs933" transform="translate(437.2,501.9) rotate(-15) scale(1.15)"/><use href="#hs933" transform="translate(521.5,254.1) rotate(8) scale(1.15)"/><use href="#hs933" transform="translate(209.2,493.5) rotate(-1) scale(1.15)"/><use href="#hs933" transform="translate(907.9,99.0) rotate(-24) scale(1.15)"/><use href="#hs933" transform="translate(738.1,232.6) rotate(5) scale(1.15)"/><use href="#hs933" transform="translate(644.3,545.1) rotate(4) scale(1.15)"/><use href="#hs933" transform="translate(422.6,28.3) rotate(21) scale(1.15)"/><use href="#hs933" transform="translate(493.5,270.0) rotate(-19) scale(1.15)"/><use href="#hs933" transform="translate(204.5,3.9) rotate(-21) scale(1.15)"/><use href="#hs933" transform="translate(764.5,418.6) rotate(14) scale(1.15)"/><use href="#hs933" transform="translate(452.2,342.0) rotate(-5) scale(1.15)"/><use href="#hs933" transform="translate(157.0,573.5) rotate(24) scale(1.15)"/><use href="#hs933" transform="translate(25.7,1.7) rotate(-2) scale(1.15)"/><use href="#hs933" transform="translate(862.6,342.3) rotate(7) scale(1.15)"/><use href="#hs933" transform="translate(3.9,181.6) rotate(-9) scale(1.15)"/><use href="#hs933" transform="translate(-5.3,386.0) rotate(-24) scale(1.15)"/><use href="#hs933" transform="translate(303.3,115.6) rotate(6) scale(1.15)"/><use href="#hs933" transform="translate(65.8,420.4) rotate(-8) scale(1.15)"/><use href="#hs933" transform="translate(20.5,593.5) rotate(21) scale(1.15)"/><use href="#hs933" transform="translate(818.8,354.8) rotate(14) scale(1.15)"/><use href="#hs933" transform="translate(48.6,184.3) rotate(5) scale(1.15)"/><use href="#hs933" transform="translate(401.3,402.3) rotate(4) scale(1.15)"/><use href="#hs933" transform="translate(144.7,59.4) rotate(-7) scale(1.15)"/><use href="#hs933" transform="translate(448.6,183.0) rotate(22) scale(1.15)"/><use href="#hs933" transform="translate(536.2,461.8) rotate(8) scale(1.15)"/><use href="#hs933" transform="translate(110.1,208.4) rotate(1) scale(1.15)"/><use href="#hs933" transform="translate(461.0,311.2) rotate(-11) scale(1.15)"/><use href="#hs933" transform="translate(36.6,504.3) rotate(13) scale(1.15)"/><use href="#hs933" transform="translate(612.3,372.7) rotate(-20) scale(1.15)"/><use href="#hs933" transform="translate(77.7,318.5) rotate(-10) scale(1.15)"/><use href="#hs933" transform="translate(-2.7,0.2) rotate(-19) scale(1.15)"/><use href="#hs933" transform="translate(331.1,548.2) rotate(22) scale(1.15)"/><use href="#hs933" transform="translate(176.1,-4.5) rotate(8) scale(1.15)"/><use href="#hs933" transform="translate(691.4,190.9) rotate(18) scale(1.15)"/><use href="#hs933" transform="translate(641.3,580.5) rotate(25) scale(1.15)"/><use href="#hs933" transform="translate(135.0,399.9) rotate(2) scale(1.15)"/><use href="#hs933" transform="translate(459.7,408.6) rotate(13) scale(1.15)"/><use href="#hs933" transform="translate(693.7,522.4) rotate(-23) scale(1.15)"/><use href="#hs933" transform="translate(-5.9,231.6) rotate(13) scale(1.15)"/><use href="#hs933" transform="translate(619.9,289.5) rotate(-12) scale(1.15)"/><use href="#hs933" transform="translate(855.3,96.2) rotate(-13) scale(1.15)"/><use href="#hs933" transform="translate(370.8,546.4) rotate(-10) scale(1.15)"/><use href="#hs933" transform="translate(557.5,14.9) rotate(15) scale(1.15)"/><use href="#hs933" transform="translate(69.5,76.9) rotate(16) scale(1.15)"/><use href="#hs933" transform="translate(897.6,425.4) rotate(-14) scale(1.15)"/><use href="#hs933" transform="translate(661.7,464.9) rotate(17) scale(1.15)"/><use href="#hs933" transform="translate(459.1,118.4) rotate(17) scale(1.15)"/><use href="#hs933" transform="translate(863.9,18.0) rotate(-11) scale(1.15)"/><use href="#hs933" transform="translate(675.8,150.6) rotate(-21) scale(1.15)"/><use href="#hs933" transform="translate(915.6,39.9) rotate(-23) scale(1.15)"/><use href="#hs933" transform="translate(404.8,521.2) rotate(12) scale(1.15)"/><use href="#hs933" transform="translate(-0.6,450.1) rotate(-6) scale(1.15)"/><use href="#hs933" transform="translate(903.7,260.6) rotate(-21) scale(1.15)"/><use href="#hs933" transform="translate(315.0,519.4) rotate(11) scale(1.15)"/><use href="#hs933" transform="translate(813.8,52.2) rotate(-17) scale(1.15)"/><use href="#hs933" transform="translate(96.8,356.6) rotate(4) scale(1.15)"/><use href="#hs933" transform="translate(58.7,523.1) rotate(-10) scale(1.15)"/><use href="#hs933" transform="translate(87.2,539.0) rotate(4) scale(1.15)"/><use href="#hs933" transform="translate(32.5,245.2) rotate(7) scale(1.15)"/><use href="#hs933" transform="translate(48.9,358.3) rotate(21) scale(1.15)"/><use href="#hs933" transform="translate(842.7,-1.5) rotate(2) scale(1.15)"/><use href="#hs933" transform="translate(600.8,15.9) rotate(10) scale(1.15)"/><use href="#hs933" transform="translate(401.9,92.2) rotate(-14) scale(1.15)"/><use href="#hs933" transform="translate(360.5,342.0) rotate(-11) scale(1.15)"/><use href="#hs933" transform="translate(675.9,378.8) rotate(-19) scale(1.15)"/><use href="#hs933" transform="translate(766.9,369.3) rotate(25) scale(1.15)"/><use href="#hs933" transform="translate(807.7,590.4) rotate(18) scale(1.15)"/><use href="#hs933" transform="translate(478.8,542.0) rotate(21) scale(1.15)"/><use href="#hs933" transform="translate(730.6,419.9) rotate(15) scale(1.15)"/><use href="#hs933" transform="translate(144.9,472.1) rotate(25) scale(1.15)"/><use href="#hs933" transform="translate(735.7,42.0) rotate(3) scale(1.15)"/><use href="#hs933" transform="translate(689.7,115.0) rotate(23) scale(1.15)"/><use href="#hs933" transform="translate(267.1,109.8) rotate(-20) scale(1.15)"/><use href="#hs933" transform="translate(513.9,315.6) rotate(18) scale(1.15)"/><use href="#hs933" transform="translate(888.4,545.7) rotate(11) scale(1.15)"/><use href="#hs933" transform="translate(619.5,602.4) rotate(-20) scale(1.15)"/><use href="#hs933" transform="translate(279.9,430.5) rotate(-11) scale(1.15)"/><use href="#hs933" transform="translate(745.5,76.3) rotate(2) scale(1.15)"/><use href="#hs933" transform="translate(634.2,509.7) rotate(3) scale(1.15)"/><use href="#hs933" transform="translate(610.6,70.1) rotate(8) scale(1.15)"/><use href="#hs933" transform="translate(847.0,426.4) rotate(-19) scale(1.15)"/><use href="#hs933" transform="translate(321.1,238.8) rotate(-2) scale(1.15)"/><use href="#hs933" transform="translate(216.1,530.4) rotate(3) scale(1.15)"/><use href="#hs933" transform="translate(877.6,252.2) rotate(25) scale(1.15)"/><use href="#hs933" transform="translate(450.2,75.0) rotate(-19) scale(1.15)"/><use href="#hs933" transform="translate(77.3,451.7) rotate(-24) scale(1.15)"/><use href="#hs933" transform="translate(540.7,331.2) rotate(-15) scale(1.15)"/><use href="#hs933" transform="translate(151.2,102.8) rotate(12) scale(1.15)"/><use href="#hs933" transform="translate(895.5,143.1) rotate(23) scale(1.15)"/><use href="#hs933" transform="translate(817.6,305.4) rotate(11) scale(1.15)"/><use href="#hs933" transform="translate(60.5,101.9) rotate(14) scale(1.15)"/><use href="#hs933" transform="translate(610.9,340.4) rotate(10) scale(1.15)"/><use href="#hs933" transform="translate(102.0,268.3) rotate(-8) scale(1.15)"/><use href="#hs933" transform="translate(4.6,151.0) rotate(11) scale(1.15)"/><use href="#hs933" transform="translate(111.7,300.3) rotate(-13) scale(1.15)"/><use href="#hs933" transform="translate(580.0,285.8) rotate(4) scale(1.15)"/><use href="#hs933" transform="translate(437.4,295.5) rotate(0) scale(1.15)"/><use href="#hs933" transform="translate(563.5,58.3) rotate(2) scale(1.15)"/><use href="#hs933" transform="translate(448.2,224.5) rotate(-18) scale(1.15)"/><use href="#hs933" transform="translate(814.4,138.8) rotate(24) scale(1.15)"/><use href="#hs933" transform="translate(232.7,382.8) rotate(14) scale(1.15)"/><use href="#hs933" transform="translate(154.8,359.7) rotate(1) scale(1.15)"/><use href="#hs933" transform="translate(932.8,75.7) rotate(25) scale(1.15)"/><use href="#hs933" transform="translate(708.2,280.9) rotate(-5) scale(1.15)"/><use href="#hs933" transform="translate(218.8,564.6) rotate(7) scale(1.15)"/><use href="#hs933" transform="translate(365.5,169.1) rotate(-7) scale(1.15)"/><use href="#hs933" transform="translate(824.2,380.8) rotate(-20) scale(1.15)"/><use href="#hs933" transform="translate(352.1,-1.0) rotate(-9) scale(1.15)"/><use href="#hs933" transform="translate(-1.1,347.5) rotate(-25) scale(1.15)"/><use href="#hs933" transform="translate(585.2,572.8) rotate(-8) scale(1.15)"/><use href="#hs933" transform="translate(592.8,176.2) rotate(12) scale(1.15)"/><use href="#hs933" transform="translate(531.7,497.9) rotate(8) scale(1.15)"/><use href="#hs933" transform="translate(150.0,229.0) rotate(-19) scale(1.15)"/><use href="#hs933" transform="translate(37.4,28.4) rotate(5) scale(1.15)"/><use href="#hs933" transform="translate(367.1,265.2) rotate(-9) scale(1.15)"/><use href="#hs933" transform="translate(331.8,175.5) rotate(13) scale(1.15)"/><use href="#hs933" transform="translate(938.0,362.7) rotate(-20) scale(1.15)"/><use href="#hs933" transform="translate(923.0,486.6) rotate(5) scale(1.15)"/><use href="#hs933" transform="translate(592.2,469.3) rotate(-13) scale(1.15)"/><use href="#hs933" transform="translate(-5.2,573.0) rotate(-2) scale(1.15)"/><use href="#hs933" transform="translate(109.4,58.8) rotate(-10) scale(1.15)"/><use href="#hs933" transform="translate(80.4,-4.7) rotate(-7) scale(1.15)"/><use href="#hs933" transform="translate(586.9,392.7) rotate(23) scale(1.15)"/><use href="#hs933" transform="translate(430.6,548.1) rotate(-16) scale(1.15)"/><use href="#hs933" transform="translate(343.4,409.9) rotate(25) scale(1.15)"/><use href="#hs933" transform="translate(789.5,405.0) rotate(25) scale(1.15)"/><use href="#hs933" transform="translate(714.1,86.7) rotate(-5) scale(1.15)"/><use href="#hs933" transform="translate(711.2,235.7) rotate(-18) scale(1.15)"/><use href="#hs933" transform="translate(935.5,106.2) rotate(-13) scale(1.15)"/><use href="#hs933" transform="translate(120.3,159.8) rotate(-3) scale(1.15)"/><use href="#hs933" transform="translate(555.4,274.6) rotate(4) scale(1.15)"/><use href="#hs933" transform="translate(596.8,114.4) rotate(-14) scale(1.15)"/><use href="#hs933" transform="translate(409.9,120.8) rotate(5) scale(1.15)"/><use href="#hs933" transform="translate(935.5,294.4) rotate(15) scale(1.15)"/><use href="#hs933" transform="translate(149.4,155.7) rotate(24) scale(1.15)"/><use href="#hs933" transform="translate(575.6,196.0) rotate(-23) scale(1.15)"/><use href="#hs933" transform="translate(102.8,235.4) rotate(-11) scale(1.15)"/><use href="#hs933" transform="translate(350.8,289.3) rotate(-24) scale(1.15)"/><use href="#hs933" transform="translate(708.1,368.6) rotate(22) scale(1.15)"/><use href="#hs933" transform="translate(845.2,400.1) rotate(-8) scale(1.15)"/><use href="#hs933" transform="translate(211.1,184.5) rotate(-16) scale(1.15)"/><use href="#hs933" transform="translate(7.7,294.4) rotate(22) scale(1.15)"/><use href="#hs933" transform="translate(43.4,79.5) rotate(-15) scale(1.15)"/><use href="#hs933" transform="translate(387.2,463.4) rotate(20) scale(1.15)"/><use href="#hs933" transform="translate(829.2,562.0) rotate(23) scale(1.15)"/><use href="#hs933" transform="translate(107.8,-3.9) rotate(-1) scale(1.15)"/><use href="#hs933" transform="translate(453.7,378.8) rotate(-19) scale(1.15)"/><use href="#hs933" transform="translate(456.2,556.1) rotate(-11) scale(1.15)"/><use href="#hs933" transform="translate(404.8,351.0) rotate(-20) scale(1.15)"/><use href="#hs933" transform="translate(155.2,33.0) rotate(2) scale(1.15)"/><use href="#hs933" transform="translate(698.0,433.5) rotate(22) scale(1.15)"/><use href="#hs933" transform="translate(795.4,503.7) rotate(-2) scale(1.15)"/><use href="#hs933" transform="translate(468.4,490.8) rotate(-10) scale(1.15)"/><use href="#hs933" transform="translate(488.0,299.6) rotate(25) scale(1.15)"/><use href="#hs933" transform="translate(338.9,497.8) rotate(20) scale(1.15)"/><use href="#hs933" transform="translate(160.6,272.2) rotate(13) scale(1.15)"/><use href="#hs933" transform="translate(121.7,490.0) rotate(12) scale(1.15)"/><use href="#hs933" transform="translate(322.1,200.0) rotate(16) scale(1.15)"/><use href="#hs933" transform="translate(905.6,298.2) rotate(-3) scale(1.15)"/><use href="#hs933" transform="translate(203.7,466.8) rotate(10) scale(1.15)"/><use href="#hs933" transform="translate(283.7,21.6) rotate(-1) scale(1.15)"/><use href="#hs933" transform="translate(125.1,84.2) rotate(15) scale(1.15)"/><use href="#hs933" transform="translate(931.1,546.1) rotate(-11) scale(1.15)"/><use href="#hs933" transform="translate(331.6,440.1) rotate(20) scale(1.15)"/><use href="#hs933" transform="translate(579.6,0.5) rotate(2) scale(1.15)"/><use href="#hs933" transform="translate(662.3,218.7) rotate(24) scale(1.15)"/><use href="#hs933" transform="translate(266.2,490.3) rotate(-11) scale(1.15)"/><use href="#hs933" transform="translate(688.4,14.2) rotate(-20) scale(1.15)"/><use href="#hs933" transform="translate(442.4,438.2) rotate(0) scale(1.15)"/><use href="#hs933" transform="translate(839.2,175.6) rotate(10) scale(1.15)"/><use href="#hs933" transform="translate(198.1,586.8) rotate(20) scale(1.15)"/><use href="#hs933" transform="translate(883.1,91.0) rotate(12) scale(1.15)"/><use href="#hs933" transform="translate(808.4,192.8) rotate(21) scale(1.15)"/><use href="#hs933" transform="translate(58.8,300.2) rotate(-21) scale(1.15)"/><use href="#hs933" transform="translate(489.5,569.3) rotate(12) scale(1.15)"/><use href="#hs933" transform="translate(308.5,-2.7) rotate(14) scale(1.15)"/><use href="#hs933" transform="translate(892.1,399.4) rotate(-12) scale(1.15)"/><use href="#hs933" transform="translate(447.2,603.8) rotate(13) scale(1.15)"/><use href="#hs933" transform="translate(660.2,519.1) rotate(-5) scale(1.15)"/><use href="#hs933" transform="translate(889.4,37.1) rotate(-8) scale(1.15)"/><use href="#hs933" transform="translate(431.2,321.2) rotate(-22) scale(1.15)"/><use href="#hs933" transform="translate(221.0,93.2) rotate(-9) scale(1.15)"/><use href="#hs933" transform="translate(387.3,603.6) rotate(16) scale(1.15)"/><use href="#hs933" transform="translate(186.3,513.5) rotate(9) scale(1.15)"/><use href="#hs933" transform="translate(638.9,64.0) rotate(-25) scale(1.15)"/><use href="#hs933" transform="translate(543.6,104.8) rotate(18) scale(1.15)"/><use href="#hs933" transform="translate(817.9,26.5) rotate(18) scale(1.15)"/><use href="#hs933" transform="translate(252.3,135.5) rotate(12) scale(1.15)"/></g></svg>
</div>
<svg class="a" style="left:0;top:0" width="1280" height="1024"><rect x="49" y="389" width="280" height="559" fill="#000"/><line x1="50" y1="444.5" x2="329" y2="444.5" stroke="#646464" stroke-width="1" stroke-dasharray="1 1"/><line x1="46" y1="444.5" x2="49" y2="444.5" stroke="#E8E8E8" stroke-width="1"/><text x="42" y="448.0" text-anchor="end" font-family="Liberation Sans" font-size="11" fill="#DDD" letter-spacing="-0.2">-10</text><line x1="50" y1="500.5" x2="329" y2="500.5" stroke="#646464" stroke-width="1" stroke-dasharray="1 1"/><line x1="46" y1="500.5" x2="49" y2="500.5" stroke="#E8E8E8" stroke-width="1"/><text x="42" y="504.0" text-anchor="end" font-family="Liberation Sans" font-size="11" fill="#DDD" letter-spacing="-0.2">-20</text><line x1="50" y1="556.5" x2="329" y2="556.5" stroke="#646464" stroke-width="1" stroke-dasharray="1 1"/><line x1="46" y1="556.5" x2="49" y2="556.5" stroke="#E8E8E8" stroke-width="1"/><text x="42" y="560.0" text-anchor="end" font-family="Liberation Sans" font-size="11" fill="#DDD" letter-spacing="-0.2">-30</text><line x1="50" y1="612.5" x2="329" y2="612.5" stroke="#646464" stroke-width="1" stroke-dasharray="1 1"/><line x1="46" y1="612.5" x2="49" y2="612.5" stroke="#E8E8E8" stroke-width="1"/><text x="42" y="616.0" text-anchor="end" font-family="Liberation Sans" font-size="11" fill="#DDD" letter-spacing="-0.2">-40</text><line x1="50" y1="668.5" x2="329" y2="668.5" stroke="#646464" stroke-width="1" stroke-dasharray="1 1"/><line x1="46" y1="668.5" x2="49" y2="668.5" stroke="#E8E8E8" stroke-width="1"/><text x="42" y="672.0" text-anchor="end" font-family="Liberation Sans" font-size="11" fill="#DDD" letter-spacing="-0.2">-50</text><line x1="50" y1="724.5" x2="329" y2="724.5" stroke="#646464" stroke-width="1" stroke-dasharray="1 1"/><line x1="46" y1="724.5" x2="49" y2="724.5" stroke="#E8E8E8" stroke-width="1"/><text x="42" y="728.0" text-anchor="end" font-family="Liberation Sans" font-size="11" fill="#DDD" letter-spacing="-0.2">-60</text><line x1="50" y1="779.5" x2="329" y2="779.5" stroke="#646464" stroke-width="1" stroke-dasharray="1 1"/><line x1="46" y1="779.5" x2="49" y2="779.5" stroke="#E8E8E8" stroke-width="1"/><text x="42" y="783.0" text-anchor="end" font-family="Liberation Sans" font-size="11" fill="#DDD" letter-spacing="-0.2">-70</text><line x1="50" y1="835.5" x2="329" y2="835.5" stroke="#646464" stroke-width="1" stroke-dasharray="1 1"/><line x1="46" y1="835.5" x2="49" y2="835.5" stroke="#E8E8E8" stroke-width="1"/><text x="42" y="839.0" text-anchor="end" font-family="Liberation Sans" font-size="11" fill="#DDD" letter-spacing="-0.2">-80</text><line x1="50" y1="891.5" x2="329" y2="891.5" stroke="#646464" stroke-width="1" stroke-dasharray="1 1"/><line x1="46" y1="891.5" x2="49" y2="891.5" stroke="#E8E8E8" stroke-width="1"/><text x="42" y="895.0" text-anchor="end" font-family="Liberation Sans" font-size="11" fill="#DDD" letter-spacing="-0.2">-90</text><line x1="92.5" y1="948" x2="92.5" y2="951" stroke="#E8E8E8"/><text x="92.5" y="964" text-anchor="middle" font-family="Liberation Sans" font-size="11" fill="#DDD" letter-spacing="-0.2">9:02</text><line x1="148.5" y1="948" x2="148.5" y2="951" stroke="#E8E8E8"/><text x="148.5" y="964" text-anchor="middle" font-family="Liberation Sans" font-size="11" fill="#DDD" letter-spacing="-0.2">9:03</text><line x1="203.5" y1="948" x2="203.5" y2="951" stroke="#E8E8E8"/><text x="203.5" y="964" text-anchor="middle" font-family="Liberation Sans" font-size="11" fill="#DDD" letter-spacing="-0.2">9:04</text><line x1="259.5" y1="948" x2="259.5" y2="951" stroke="#E8E8E8"/><text x="259.5" y="964" text-anchor="middle" font-family="Liberation Sans" font-size="11" fill="#DDD" letter-spacing="-0.2">9:05</text><line x1="315.5" y1="948" x2="315.5" y2="951" stroke="#E8E8E8"/><text x="315.5" y="964" text-anchor="middle" font-family="Liberation Sans" font-size="11" fill="#DDD" letter-spacing="-0.2">9:06</text><text transform="translate(18,671) rotate(-90)" text-anchor="middle" font-family="Liberation Sans" font-size="11" fill="#CCC" letter-spacing="-0.2">Signal Strength [dBm]</text><line x1="63.5" y1="841" x2="63.5" y2="947" stroke="#B02880" stroke-width="1" stroke-dasharray="1 1"/><line x1="80.5" y1="852" x2="80.5" y2="947" stroke="#C03050" stroke-width="1" stroke-dasharray="1 1"/><line x1="84.5" y1="846" x2="84.5" y2="947" stroke="#7A3AB0" stroke-width="1" stroke-dasharray="1 1"/><line x1="85.5" y1="846" x2="85.5" y2="947" stroke="#8A40C0" stroke-width="1" stroke-dasharray="1 1"/><line x1="91.5" y1="830" x2="91.5" y2="947" stroke="#C03838" stroke-width="1" stroke-dasharray="1 1"/><line x1="94.5" y1="834" x2="94.5" y2="947" stroke="#B02880" stroke-width="1" stroke-dasharray="1 1"/><polyline points="50,641.5 53,641.5 54,645.5 58,645.5 59,641.5 60,645.5 63,645.5 64,641.5 65,645.5 66,641.5 67,645.5 70,641.5 71,645.5 73,641.5 74,645.5 78,645.5 79,641.5 80,645.5 83,645.5 85,641.5 86,635 87,641.5 88,645.5 89,641.5 92,641.5 93,645.5 95,641.5 97,645.5" fill="none" stroke="#FFA030" stroke-width="1"/><polyline points="50,651.5 62,651.5 64,660 67,668 69,673.5 73,673.5 75,669 77,673.5 84,673.5 85.5,645.5 92,645.5 94,649 96,652" fill="none" stroke="#3A4AE0" stroke-width="1"/><polyline points="50,723.5 62,723.5 64.5,717.5 67,723.5 69,723.5 71.5,717.5 74,723.5 92.5,723.5 94.5,730 96,718" fill="none" stroke="#B8B8B8" stroke-width="1"/><polyline points="50,802.5 62,802.5 62.4,822 66,824.6 69.5,827.5 73,832 76,826 79.4,824.6 84,830 89.4,821 91,819 93,823 96,829" fill="none" stroke="#E02020" stroke-width="1"/><polyline points="50,807.5 62,807.5 62.4,817.6 64.8,813.5 67,817.6 69.5,822.8 73.6,826.4 77.7,814.6 77.7,822.8 81,826 86.5,825.8 91.1,821 96.4,813.5" fill="none" stroke="#40D040" stroke-width="1"/><polyline points="50,824.5 62,824.5 64,828 68,834 71.2,837.5 73,842 76,836 80,840 85,836 92.3,831.6 95,827" fill="none" stroke="#30A0E0" stroke-width="1"/><polyline points="61.9,827.5 62.4,841 64.8,842 66.5,852.7 68,842 70,851.6 71.5,842 74.7,842 78.3,851.6 79.4,852.7 81.2,841 83.5,845.7 87.6,835 88.8,824.6 88.8,820 93.5,818.7 96.4,819.3 96.4,825.8 94,830.5 87.6,834" fill="none" stroke="#F0E040" stroke-width="1"/><polyline points="64.8,835.5 78.3,835.5 83.5,831.5 88,834" fill="none" stroke="#8833CC" stroke-width="2"/><polyline points="86,826 90,830 96.4,834.6 93,828 88,838 84,848" fill="none" stroke="#C8F030" stroke-width="1"/><polyline points="66,832 70,828 74,836 80,846 86,838 92,842 96,836" fill="none" stroke="#906020" stroke-width="1"/><rect x="49.5" y="389.5" width="280" height="559" fill="none" stroke="#E4E4E4" stroke-width="1"/><rect x="401" y="388" width="864" height="559" fill="#000"/><line x1="402" y1="450.5" x2="1265" y2="450.5" stroke="#646464" stroke-width="1" stroke-dasharray="1 1"/><line x1="398" y1="450.5" x2="401" y2="450.5" stroke="#E8E8E8" stroke-width="1"/><text x="389" y="454.0" text-anchor="end" font-family="Liberation Sans" font-size="11" fill="#DDD" letter-spacing="-0.2">-10</text><line x1="402" y1="506.5" x2="1265" y2="506.5" stroke="#646464" stroke-width="1" stroke-dasharray="1 1"/><line x1="398" y1="506.5" x2="401" y2="506.5" stroke="#E8E8E8" stroke-width="1"/><text x="389" y="510.0" text-anchor="end" font-family="Liberation Sans" font-size="11" fill="#DDD" letter-spacing="-0.2">-20</text><line x1="402" y1="561.5" x2="1265" y2="561.5" stroke="#646464" stroke-width="1" stroke-dasharray="1 1"/><line x1="398" y1="561.5" x2="401" y2="561.5" stroke="#E8E8E8" stroke-width="1"/><text x="389" y="565.0" text-anchor="end" font-family="Liberation Sans" font-size="11" fill="#DDD" letter-spacing="-0.2">-30</text><line x1="402" y1="616.5" x2="1265" y2="616.5" stroke="#646464" stroke-width="1" stroke-dasharray="1 1"/><line x1="398" y1="616.5" x2="401" y2="616.5" stroke="#E8E8E8" stroke-width="1"/><text x="389" y="620.0" text-anchor="end" font-family="Liberation Sans" font-size="11" fill="#DDD" letter-spacing="-0.2">-40</text><line x1="402" y1="671.5" x2="1265" y2="671.5" stroke="#646464" stroke-width="1" stroke-dasharray="1 1"/><line x1="398" y1="671.5" x2="401" y2="671.5" stroke="#E8E8E8" stroke-width="1"/><text x="389" y="675.0" text-anchor="end" font-family="Liberation Sans" font-size="11" fill="#DDD" letter-spacing="-0.2">-50</text><line x1="402" y1="726.5" x2="1265" y2="726.5" stroke="#646464" stroke-width="1" stroke-dasharray="1 1"/><line x1="398" y1="726.5" x2="401" y2="726.5" stroke="#E8E8E8" stroke-width="1"/><text x="389" y="730.0" text-anchor="end" font-family="Liberation Sans" font-size="11" fill="#DDD" letter-spacing="-0.2">-60</text><line x1="402" y1="782.5" x2="1265" y2="782.5" stroke="#646464" stroke-width="1" stroke-dasharray="1 1"/><line x1="398" y1="782.5" x2="401" y2="782.5" stroke="#E8E8E8" stroke-width="1"/><text x="389" y="786.0" text-anchor="end" font-family="Liberation Sans" font-size="11" fill="#DDD" letter-spacing="-0.2">-70</text><line x1="402" y1="837.5" x2="1265" y2="837.5" stroke="#646464" stroke-width="1" stroke-dasharray="1 1"/><line x1="398" y1="837.5" x2="401" y2="837.5" stroke="#E8E8E8" stroke-width="1"/><text x="389" y="841.0" text-anchor="end" font-family="Liberation Sans" font-size="11" fill="#DDD" letter-spacing="-0.2">-80</text><line x1="402" y1="892.5" x2="1265" y2="892.5" stroke="#646464" stroke-width="1" stroke-dasharray="1 1"/><line x1="398" y1="892.5" x2="401" y2="892.5" stroke="#E8E8E8" stroke-width="1"/><text x="389" y="896.0" text-anchor="end" font-family="Liberation Sans" font-size="11" fill="#DDD" letter-spacing="-0.2">-90</text><text x="515.2" y="963" text-anchor="middle" font-family="Liberation Sans" font-size="11" fill="#DDD" letter-spacing="-0.2">1</text><text x="560.1" y="963" text-anchor="middle" font-family="Liberation Sans" font-size="11" fill="#DDD" letter-spacing="-0.2">2</text><text x="605.0" y="963" text-anchor="middle" font-family="Liberation Sans" font-size="11" fill="#DDD" letter-spacing="-0.2">3</text><text x="649.9" y="963" text-anchor="middle" font-family="Liberation Sans" font-size="11" fill="#DDD" letter-spacing="-0.2">4</text><text x="694.8" y="963" text-anchor="middle" font-family="Liberation Sans" font-size="11" fill="#DDD" letter-spacing="-0.2">5</text><text x="739.7" y="963" text-anchor="middle" font-family="Liberation Sans" font-size="11" fill="#DDD" letter-spacing="-0.2">6</text><text x="784.6" y="963" text-anchor="middle" font-family="Liberation Sans" font-size="11" fill="#DDD" letter-spacing="-0.2">7</text><text x="829.5" y="963" text-anchor="middle" font-family="Liberation Sans" font-size="11" fill="#DDD" letter-spacing="-0.2">8</text><text x="874.4" y="963" text-anchor="middle" font-family="Liberation Sans" font-size="11" fill="#DDD" letter-spacing="-0.2">9</text><text x="919.3" y="963" text-anchor="middle" font-family="Liberation Sans" font-size="11" fill="#DDD" letter-spacing="-0.2">10</text><text x="964.2" y="963" text-anchor="middle" font-family="Liberation Sans" font-size="11" fill="#DDD" letter-spacing="-0.2">11</text><text x="1009.1" y="963" text-anchor="middle" font-family="Liberation Sans" font-size="11" fill="#DDD" letter-spacing="-0.2">12</text><text x="1054.0" y="963" text-anchor="middle" font-family="Liberation Sans" font-size="11" fill="#DDD" letter-spacing="-0.2">13</text><text x="1161.0" y="963" text-anchor="middle" font-family="Liberation Sans" font-size="11" fill="#DDD" letter-spacing="-0.2">14</text><text transform="translate(366,671) rotate(-90)" text-anchor="middle" font-family="Liberation Sans" font-size="11" fill="#CCC" letter-spacing="-0.2">Signal Strength [dBm]</text><svg x="402" y="389" width="863" height="558" overflow="hidden"><g transform="translate(-402,-389)"><text x="554.5" y="820.5" text-anchor="middle" font-family="Liberation Sans" font-size="11" fill="#F02828" letter-spacing="-0.2">ONO8586</text><text x="554.5" y="809.4" text-anchor="middle" font-family="Liberation Sans" font-size="11" fill="#44CC22" letter-spacing="-0.2">ONO1413</text><text x="509.4" y="825.6" text-anchor="middle" font-family="Liberation Sans" font-size="11" fill="#CC3399" letter-spacing="-0.2">WLAN_5C</text><text x="734.5" y="831.5" text-anchor="middle" font-family="Liberation Sans" font-size="11" fill="#F0E040" letter-spacing="-0.2">WLAN_81</text><text x="734.5" y="643.8" text-anchor="middle" font-family="Liberation Sans" font-size="11" fill="#3A46D6" letter-spacing="-0.2">WLAN_21</text><text x="734.5" y="715.6" text-anchor="middle" font-family="Liberation Sans" font-size="11" fill="#A8A8A8" letter-spacing="-0.2">WLAN_F0</text><text x="869.5" y="643.8" text-anchor="middle" font-family="Liberation Sans" font-size="11" fill="#FFA040" letter-spacing="-0.2">WLAN_66</text><text x="959.5" y="831.5" text-anchor="middle" font-family="Liberation Sans" font-size="11" fill="#33A0DD" letter-spacing="-0.2">WLAN_AE</text><text x="914.5" y="838.0" text-anchor="middle" font-family="Liberation Sans" font-size="11" fill="#806030" letter-spacing="-0.2">WLAN_EE</text><text x="914.5" y="814.9" text-anchor="middle" font-family="Liberation Sans" font-size="11" fill="#C8F030" letter-spacing="-0.2">ConfigFree Link</text><text x="1004.5" y="826.0" text-anchor="middle" font-family="Liberation Sans" font-size="11" fill="#8833CC" letter-spacing="-0.2">ONO9192</text><text x="1004.5" y="826.0" text-anchor="middle" font-family="Liberation Sans" font-size="11" fill="#F02828" letter-spacing="-0.2">ONO0807</text><path d="M455.5,948 Q468.9,902.0 469.0,889.0 L469.2,824.5 L639.8,824.5 L640.0,889.0 Q640.1,902.0 653.5,948" fill="none" stroke="#F02828" stroke-width="2" stroke-dasharray="6 2"/><path d="M455.5,948 Q468.9,897.9 469.0,883.7 L469.2,813.4 L639.8,813.4 L640.0,883.7 Q640.1,897.9 653.5,948" fill="none" stroke="#44CC22" stroke-width="2"/><path d="M410.4,948 Q423.9,904.1 423.9,891.7 L424.1,829.6 L594.8,829.6 L595.0,891.7 Q595.0,904.1 608.5,948" fill="none" stroke="#CC3399" stroke-width="2" stroke-dasharray="6 2"/><path d="M635.5,948 Q648.9,906.1 649.0,894.3 L649.2,835.5 L819.8,835.5 L820.0,894.3 Q820.1,906.1 833.5,948" fill="none" stroke="#F0E040" stroke-width="2" stroke-dasharray="6 2"/><path d="M635.5,948 Q648.9,835.9 649.0,804.2 L649.2,647.8 L819.8,647.8 L820.0,804.2 Q820.1,835.9 833.5,948" fill="none" stroke="#3A46D6" stroke-width="2" stroke-dasharray="6 2"/><path d="M635.5,948 Q648.9,862.7 649.0,838.7 L649.2,719.6 L819.8,719.6 L820.0,838.7 Q820.1,862.7 833.5,948" fill="none" stroke="#A8A8A8" stroke-width="2" stroke-dasharray="6 2"/><path d="M770.5,948 Q783.9,835.9 784.0,804.2 L784.2,647.8 L954.8,647.8 L955.0,804.2 Q955.1,835.9 968.5,948" fill="none" stroke="#FFA040" stroke-width="2" stroke-dasharray="6 2"/><path d="M860.5,948 Q873.9,906.1 874.0,894.3 L874.2,835.5 L1044.8,835.5 L1045.0,894.3 Q1045.0,906.1 1058.5,948" fill="none" stroke="#33A0DD" stroke-width="2" stroke-dasharray="6 2"/><path d="M815.5,948 Q828.9,908.2 829.0,897.0 L829.2,842.0 L999.8,842.0 L1000.0,897.0 Q1000.1,908.2 1013.5,948" fill="none" stroke="#806030" stroke-width="2" stroke-dasharray="6 2"/><path d="M815.5,948 Q828.9,899.9 829.0,886.4 L829.2,818.9 L999.8,818.9 L1000.0,886.4 Q1000.1,899.9 1013.5,948" fill="none" stroke="#C8F030" stroke-width="2" stroke-dasharray="6 2"/><path d="M905.5,948 Q918.9,904.1 919.0,891.7 L919.2,830.0 L1089.8,830.0 L1090.0,891.7 Q1090.0,904.1 1103.5,948" fill="none" stroke="#8833CC" stroke-width="2" stroke-dasharray="6 2"/><path d="M905.5,948 Q918.9,904.1 919.0,891.7 L919.2,830.0 L1089.8,830.0 L1090.0,891.7 Q1090.0,904.1 1103.5,948" fill="none" stroke="#F02828" stroke-width="2"/></g></svg><rect x="401.5" y="388.5" width="864" height="559" fill="none" stroke="#E4E4E4" stroke-width="1"/></svg>
<div class="a" style="left:343px;top:374px;width:4px;height:598px;background:#F3F1E6"></div>
<div class="a" style="left:0;top:972px;width:1280px;height:22px;background:linear-gradient(to bottom,#F2F0E6 0,#ECE9D8 4px,#ECE9D8 19px,#DDD8C8 20px,#F4F4F8 21px)"></div>
<div class="a" style="left:2px;top:976px;width:50px;height:15px;background:#F5F4EE;border-top:1px solid #9A9888;border-left:1px solid #ACA899;border-right:1px solid #FFF"></div>
<div class="t" style="left:6px;top:977px">12 AP(s)</div>
<div class="a" style="left:53px;top:975px;width:1134px;height:16px;border-top:1px solid #8E8C7C;border-left:1px solid #8E8C7C;border-right:1px solid #FFF"></div>
<div class="a" style="left:1189px;top:975px;width:75px;height:16px;background:#F5F4EE;border-top:1px solid #8E8C7C;border-left:1px solid #8E8C7C;border-right:1px solid #FFF"></div>
<div class="t" style="left:1192px;top:977px">GPS: Disabled</div>
<div class="a" style="left:0;top:994px;width:1280px;height:30px;background:linear-gradient(to bottom,#2A50B8 0,#3E8CE8 1.5px,#3A86E4 3px,#2458D8 5px,#2153D4 10px,#2560E0 22px,#2860DC 27px,#1A45B0 30px)"></div>
<div class="a" style="left:0;top:994px;width:101px;height:30px;border-radius:0 14px 14px 0 / 0 15px 15px 0;background:radial-gradient(ellipse 70% 90% at 45% 45%,#5DB25A 0,#3F9A3F 55%,#2F7A2F 100%);box-shadow:inset 0 2px 1px rgba(255,255,255,0.35), inset -2px 0 2px rgba(0,0,0,0.25)"></div>
<svg class="a" style="left:8px;top:999px" width="22" height="20"><path d="M2 4 Q6 2 10 4 L9 10 Q5 8 1 10Z" fill="#F05A28"/><path d="M11 4 Q15 6 20 4 L19 10 Q15 12 10 10Z" fill="#7FBA00"/><path d="M1 11 Q5 9 9 11 L8 17 Q4 15 0 17Z" fill="#00A4EF"/><path d="M10 11 Q14 13 19 11 L18 17 Q14 19 9 17Z" fill="#FFB900"/></svg>
<div class="t" style="left:34px;top:999px;font:italic bold 17px/20px Liberation Sans,sans-serif;color:#FFF;letter-spacing:0;text-shadow:1px 1px 1px #1A4A1A">Inicio</div>
<div class="a" style="left:115px;top:1001px;width:16px;height:16px;border-radius:50%;background:conic-gradient(from -30deg,#DB4437 0 120deg,#F4C20D 120deg 240deg,#0F9D58 240deg 360deg)"></div><div class="a" style="left:119px;top:1005px;width:8px;height:8px;border-radius:50%;background:#4285F4;border:1.5px solid #FFF"></div>
<svg class="a" style="left:136px;top:1000px" width="19" height="19"><rect x="2" y="2" width="14" height="15" rx="2" fill="#2A6AD8" stroke="#0A3A9A"/><rect x="4" y="4" width="10" height="11" rx="1" fill="#F4F8FF"/><path d="M6 8 L12 8 M6 11 L11 11" stroke="#2A6AD8" stroke-width="1.5"/><path d="M11 3 L16 1 L15 6Z" fill="#E8F0FF"/></svg>
<svg class="a" style="left:160px;top:1000px" width="19" height="19"><path d="M9.5 4 A5.5 5.5 0 1 0 14.6 12 L11.8 12 A3 3 0 0 1 6.6 10.5 L15 10.5 A5.5 5.5 0 0 0 9.5 4 Z M6.8 8.6 A3 3 0 0 1 12.2 8.6 Z" fill="#2E8BE8"/><path d="M2 15 Q1 11 7 6 Q14 1 17 3 Q18 5 15 8" fill="none" stroke="#F0A020" stroke-width="1.6"/></svg>
<div class="t" style="left:189px;top:996px;color:#DDE8FF;font-size:12px">»</div>
<div class="a" style="left:204px;top:997px;width:158px;height:24px;border-radius:3px;background:linear-gradient(to bottom,#5B95F2 0,#3C81F3 3px,#3A7CEB 20px,#2F6BD8 100%);box-shadow:inset 1px 1px 0 rgba(255,255,255,0.25)"></div><div class="a" style="left:211px;top:1001px;width:16px;height:16px;border-radius:50%;background:conic-gradient(from -30deg,#DB4437 0 120deg,#F4C20D 120deg 240deg,#0F9D58 240deg 360deg)"></div><div class="a" style="left:215px;top:1005px;width:8px;height:8px;border-radius:50%;background:#4285F4;border:1.5px solid #FFF"></div><div class="t" style="left:233px;top:1003px;color:#FFF;letter-spacing:0">YouTube - Bebe - A q...</div>
<div class="a" style="left:365px;top:997px;width:157px;height:24px;border-radius:3px;background:linear-gradient(to bottom,#5B95F2 0,#3C81F3 3px,#3A7CEB 20px,#2F6BD8 100%);box-shadow:inset 1px 1px 0 rgba(255,255,255,0.25)"></div><div class="a" style="left:372px;top:1001px;width:16px;height:16px;border-radius:50%;background:conic-gradient(from -30deg,#DB4437 0 120deg,#F4C20D 120deg 240deg,#0F9D58 240deg 360deg)"></div><div class="a" style="left:376px;top:1005px;width:8px;height:8px;border-radius:50%;background:#4285F4;border:1.5px solid #FFF"></div><div class="t" style="left:394px;top:1003px;color:#FFF;letter-spacing:0">Editar entrada &lt; Smyt...</div>
<div class="a" style="left:525px;top:997px;width:159px;height:24px;border-radius:3px;background:linear-gradient(to bottom,#1E52B8 0,#1A48B0 100%);box-shadow:inset 1px 1px 0 rgba(255,255,255,0.25)"></div><svg class="a" style="left:533px;top:1001px" width="16" height="16"><rect x="0.5" y="0.5" width="15" height="15" rx="3" fill="#FFF6EE" stroke="#F4D8C0"/><path d="M6 2.5 L5 13.5 M10.5 2.5 L9.5 13.5 M2.5 6 L13.5 6 M2.5 10 L13.5 10" stroke="#F27B1E" stroke-width="2.4"/></svg><div class="t" style="left:554px;top:1003px;color:#FFF;letter-spacing:0">inSSIDer</div>
<div class="t" style="left:1073px;top:1003px;color:#A8C8F8">SmythSys</div>
<div class="t" style="left:1130px;top:996px;color:#DDE8FF;font-size:12px">»</div>
<div class="a" style="left:1151px;top:994px;width:129px;height:30px;background:linear-gradient(to bottom,#0C59B9 0,#139EE9 2px,#18B9EF 5px,#0F9CE6 24px,#1481D9 30px);border-left:1px solid #1042AF"></div>
<div class="a" style="left:1142px;top:999px;width:19px;height:19px;border-radius:50%;background:radial-gradient(circle at 40% 35%,#B8E0FF 0,#3A90E8 60%,#1A60C0 100%);border:1px solid #E0F0FF"></div>
<svg class="a" style="left:1146px;top:1003px" width="12" height="12"><path d="M8 2 L4 6 L8 10" stroke="#FFF" stroke-width="2.5" fill="none"/></svg>
<div class="a" style="left:1163px;top:1001px;width:15px;height:15px;background:#3AB83A;border:1px solid #0A4A0A"></div>
<svg class="a" style="left:1164px;top:1004px" width="13" height="9"><path d="M1 4.5 Q6.5 -1 12 4.5 Q6.5 10 1 4.5Z" fill="#F0F0F0" stroke="#000" stroke-width="1"/><circle cx="6.5" cy="4.5" r="2.2" fill="#000"/></svg>
<svg class="a" style="left:1179px;top:1000px" width="20" height="18"><rect x="1" y="4" width="10" height="8" fill="#3A4AA8" stroke="#C8D0E8"/><rect x="4" y="13" width="6" height="2" fill="#D0D8F0"/><path d="M13 3 Q15 7 13 11 M15.5 1.5 Q18.5 7 15.5 12.5" fill="none" stroke="#E0ECFF" stroke-width="1.2"/></svg>
<svg class="a" style="left:1199px;top:1000px" width="15" height="17"><circle cx="8" cy="6" r="5.5" fill="#8ACB6A" stroke="#E8F8E0"/><path d="M5.5 6 L7.5 8 L11 4" stroke="#FFF" stroke-width="1.6" fill="none"/><path d="M2 12 L6 16 M4 10 L8 14 M13 11 L9 15" stroke="#F0F0F0" stroke-width="1.5"/></svg>
<div class="a" style="left:1217px;top:1002px;width:13px;height:13px;border-radius:50%;background:radial-gradient(circle at 35% 35%,#B0FFA0 0,#22C022 50%,#0A7A0A 100%)"></div>
<div class="t" style="left:1241px;top:1003px;color:#FFF">9:02</div>
</body></html>
